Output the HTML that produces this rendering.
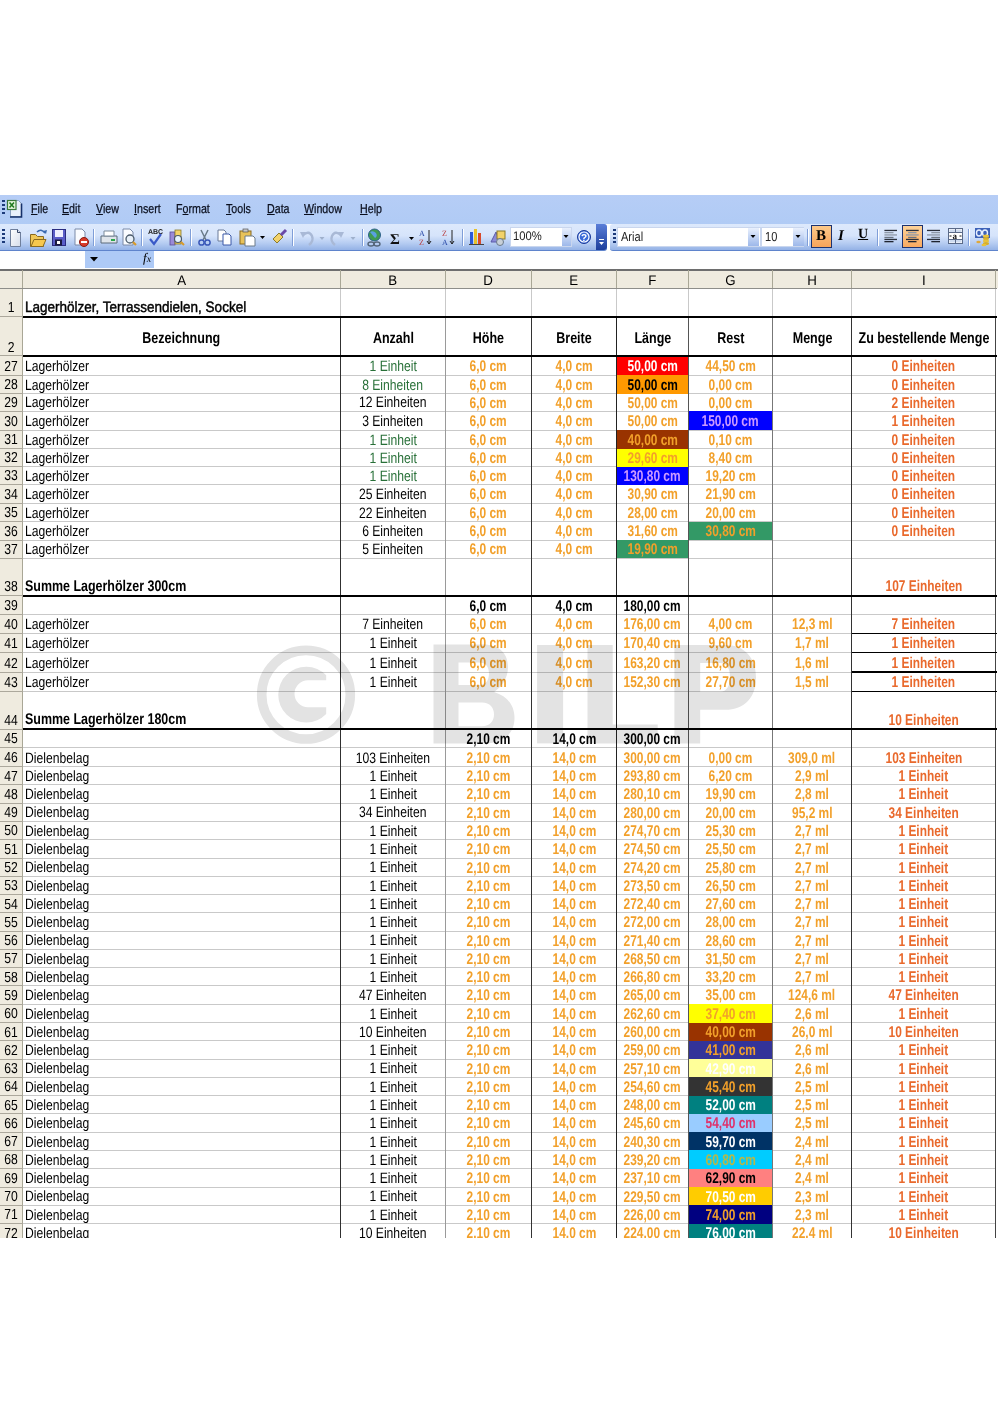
<!DOCTYPE html>
<html><head><meta charset="utf-8">
<style>
html,body{margin:0;padding:0;background:#fff;}
body{width:1000px;height:1410px;position:relative;overflow:hidden;font-family:"Liberation Sans",sans-serif;text-rendering:geometricPrecision;}
div{position:absolute;box-sizing:border-box;}
.c{white-space:nowrap;overflow:visible;}
.t{display:inline-block;transform-origin:50% 50%;}
.menu{left:0;top:195px;width:998px;height:29px;background:linear-gradient(#b6cdf6,#b0cbf5);}
.mi{top:6px;font-size:13px;color:#0a0f1e;transform:scaleX(.82);transform-origin:0 0;-webkit-text-stroke:0.25px #0a0f1e;}
.tb{top:224px;height:27px;background:linear-gradient(#dde9fc 0%,#d6e4fb 45%,#b4cbf1 75%,#94b2e6 100%);border-bottom:1.5px solid #5f84cc;}
.sep{top:5px;width:2px;height:17px;border-left:1px solid #7f9ed8;border-right:1px solid #fff;}
.grip{top:5px;width:3px;height:16px;background:repeating-linear-gradient(transparent 0 0.5px,#1c3a7a 0.5px 2.5px,transparent 2.5px 4px);}
</style></head><body>
<!-- menu bar -->
<div class="menu">
 <div class="grip" style="left:2px;top:5px;height:16px"></div>
 <svg style="position:absolute;left:6px;top:4px" width="18" height="20" viewBox="0 0 18 20">
  <path d="M4.5 1.5 h8 l3 3 v13 h-11z" fill="#e8f0fb" stroke="#8aa0c0" stroke-width="1"/>
  <path d="M15.5 4.5 v13.5 h-11.5" fill="none" stroke="#15306a" stroke-width="1.6"/>
  <rect x="1.5" y="1.5" width="8.5" height="9" fill="#e6f6dc" stroke="#3a7a3a" stroke-width="1.2"/>
  <path d="M3.5 3.5 L8 8.5 M8 3.5 L3.5 8.5" stroke="#1f7a1f" stroke-width="1.6"/>
 </svg>
 <div class="mi" style="left:31px"><u>F</u>ile</div>
 <div class="mi" style="left:62px"><u>E</u>dit</div>
 <div class="mi" style="left:96px"><u>V</u>iew</div>
 <div class="mi" style="left:134px"><u>I</u>nsert</div>
 <div class="mi" style="left:176px">F<u>o</u>rmat</div>
 <div class="mi" style="left:226px"><u>T</u>ools</div>
 <div class="mi" style="left:267px"><u>D</u>ata</div>
 <div class="mi" style="left:304px"><u>W</u>indow</div>
 <div class="mi" style="left:360px"><u>H</u>elp</div>
</div>
<!-- standard toolbar -->
<div class="tb" style="left:0;width:607px;border-radius:0 3px 3px 0">
 <div class="grip" style="left:2px"></div>
 <div class="sep" style="left:93px"></div><div class="sep" style="left:141px"></div><div class="sep" style="left:190px"></div><div class="sep" style="left:292px"></div><div class="sep" style="left:362px"></div><div class="sep" style="left:462px"></div>
 <svg style="position:absolute;left:0;top:0" width="607" height="26">
  <defs><linearGradient id="gPage" x1="0" y1="0" x2="1" y2="1"><stop offset="0" stop-color="#ffffff"/><stop offset="1" stop-color="#d4dcea"/></linearGradient></defs>
  <!-- new -->
  <path d="M10.5 5.5 h7 l3 3 v14 h-10z" fill="url(#gPage)" stroke="#6f7f9c" stroke-width="1"/>
  <path d="M17.5 5.5 v3 h3" fill="#dfe6f2" stroke="#3a4a6a" stroke-width="1"/>
  <!-- open -->
  <path d="M30.5 10.5 h5 l2 2 h6 v10 h-13z" fill="#f0c858" stroke="#8a6a20"/>
  <path d="M31 22.5 l3 -7 h12 l-3 7z" fill="#f7c84e" stroke="#8a6a20"/>
  <path d="M37 8 q4 -4 8 1" fill="none" stroke="#3a6ab0" stroke-width="1.6"/>
  <path d="M43 7 l3 3 l1 -4z" fill="#3a6ab0"/>
  <!-- save -->
  <rect x="52.5" y="5.5" width="13" height="16" fill="#5a5ec8" stroke="#2a2c80"/>
  <rect x="55" y="6" width="8" height="7" fill="#eef0ff"/>
  <rect x="55" y="15.5" width="7" height="6" fill="#1a1a40"/>
  <rect x="57" y="17" width="3" height="3" fill="#fff"/>
  <!-- permission -->
  <path d="M75 5 h7 l3 3 v13 h-10z" fill="#fafcff" stroke="#7a8aa8"/>
  <circle cx="84" cy="18" r="4.5" fill="#d83a2a" stroke="#8a1a10"/>
  <rect x="81" y="17" width="6" height="2" fill="#fff"/>
  <!-- print -->
  <path d="M101 12 h16 v7 h-16z" fill="#dfe4ea" stroke="#5a6a7a"/>
  <path d="M104 7 h10 v5 h-10z" fill="#fff" stroke="#7a8a9a"/>
  <rect x="111" y="15" width="4" height="2" fill="#2aa84a"/>
  <!-- preview -->
  <path d="M123 5 h7 l3 3 v13 h-10z" fill="#fafcff" stroke="#7a8aa8"/>
  <circle cx="130" cy="15" r="4" fill="#e8f0f8" stroke="#4a5a6a" stroke-width="1.3"/>
  <path d="M133 18 l3 3" stroke="#d89a2a" stroke-width="2.2"/>
  <!-- spelling -->
  <text x="148" y="10" font-family="Liberation Sans" font-size="7" font-weight="bold" fill="#222">ABC</text>
  <path d="M150 15 l4 5 l7 -10" fill="none" stroke="#3a5ac8" stroke-width="2.2"/>
  <!-- research -->
  <rect x="170" y="8" width="5" height="13" fill="#9a8ad8" stroke="#5a4a98" stroke-width=".8"/>
  <rect x="175" y="6" width="6" height="14" fill="#f2d26a" stroke="#8a7a2a" stroke-width=".8"/>
  <circle cx="178" cy="15" r="3.5" fill="#e8f4ff" stroke="#4a5a6a" stroke-width="1.2"/>
  <path d="M181 18 l3 3" stroke="#d89a2a" stroke-width="2"/>
  <!-- cut -->
  <path d="M201 6 l5 10 M208 6 l-5 10" stroke="#6a7a8a" stroke-width="1.5"/>
  <circle cx="201.5" cy="18.5" r="2.6" fill="none" stroke="#3a58b8" stroke-width="1.5"/>
  <circle cx="207.5" cy="18.5" r="2.6" fill="none" stroke="#3a58b8" stroke-width="1.5"/>
  <!-- copy -->
  <path d="M218 6 h6 l2 2 v9 h-8z" fill="#fff" stroke="#6a7a98"/>
  <path d="M223 10 h6 l2 2 v9 h-8z" fill="#fff" stroke="#3a58a8"/>
  <!-- paste -->
  <rect x="240" y="7" width="11" height="13" fill="#e8c25a" stroke="#8a6a20"/>
  <rect x="243" y="5" width="5" height="3" fill="#c8c8c8" stroke="#555" stroke-width=".7"/>
  <path d="M245 12 h8 l2 2 v8 h-10z" fill="#fff" stroke="#6a7a8a"/>
  <path d="M260 12 h5 l-2.5 3z" fill="#000"/>
  <!-- format painter -->
  <path d="M273 15 l6 -6 l4 4 l-6 6z" fill="#f2d26a" stroke="#8a7a2a"/>
  <path d="M281 11 l5 -5" stroke="#6a4aa8" stroke-width="3"/>
  <!-- undo/redo grayed -->
  <path d="M303 11 q6 -5 9 1 q2 5 -3 9" fill="none" stroke="#a9b9d6" stroke-width="2.4"/>
  <path d="M300 8 l6 0 l-3 6z" fill="#a9b9d6"/>
  <path d="M319.5 13 h5 l-2.5 3z" fill="#9fb0cc"/>
  <path d="M341 11 q-6 -5 -9 1 q-2 5 3 9" fill="none" stroke="#a9b9d6" stroke-width="2.4"/>
  <path d="M344 8 l-6 0 l3 6z" fill="#a9b9d6"/>
  <path d="M350.5 13 h5 l-2.5 3z" fill="#9fb0cc"/>
  <!-- hyperlink -->
  <circle cx="374.5" cy="11" r="6" fill="#3f9a52" stroke="#2c5f8a" stroke-width="1"/>
  <path d="M370 8 q3 -2 6 1 q2 3 -1 5" fill="#5aa0e0"/>
  <ellipse cx="371" cy="20" rx="3" ry="2" fill="none" stroke="#55657a" stroke-width="1.4"/>
  <ellipse cx="377" cy="20" rx="3" ry="2" fill="none" stroke="#55657a" stroke-width="1.4"/>
  <!-- sigma -->
  <text x="390" y="19.5" font-family="Liberation Serif" font-size="15" font-weight="bold" fill="#111">Σ</text>
  <path d="M409 13 h5 l-2.5 3z" fill="#000"/>
  <!-- sort -->
  <text x="419" y="12" font-family="Liberation Serif" font-size="8" fill="#2a4aa8">A</text>
  <text x="419" y="21" font-family="Liberation Serif" font-size="8" fill="#b83a3a">Z</text>
  <path d="M429 6 v14 M427 17 l2 3 l2 -3" stroke="#222" fill="none"/>
  <text x="442" y="12" font-family="Liberation Serif" font-size="8" fill="#b83a3a">Z</text>
  <text x="442" y="21" font-family="Liberation Serif" font-size="8" fill="#2a4aa8">A</text>
  <path d="M452 6 v14 M450 17 l2 3 l2 -3" stroke="#222" fill="none"/>
  <!-- chart -->
  <rect x="470" y="8" width="3" height="12" fill="#2a5ad8"/>
  <rect x="474" y="5" width="3" height="15" fill="#e8c22a"/>
  <rect x="478" y="9" width="3" height="11" fill="#d84a2a"/>
  <path d="M469 20.5 h15" stroke="#444"/>
  <!-- drawing -->
  <path d="M491 18 l5 -10 l4 10z" fill="#8a8ad8" stroke="#5a5aa8"/>
  <rect x="497" y="7" width="8" height="8" fill="#f2d26a" stroke="#8a7a2a"/>
  <circle cx="500" cy="18" r="3.5" fill="#c8d0d8" stroke="#6a7a8a"/>
  <!-- help -->
  <circle cx="584" cy="13" r="6.5" fill="#3a6ad8" stroke="#1a3a98"/>
  <circle cx="584" cy="13" r="5" fill="none" stroke="#fff" stroke-width="1.2"/>
  <text x="581" y="17" font-family="Liberation Sans" font-size="10" font-weight="bold" fill="#fff">?</text>
 </svg>
 <div style="left:510px;top:3px;width:62px;height:20px;background:#fff;border:1px solid #c9d6ee"></div>
 <div style="left:562px;top:4px;width:9px;height:18px;background:linear-gradient(#e9f0fd,#9db8ea)"></div>
 <svg style="position:absolute;left:563px;top:11px" width="7" height="4"><path d="M0.5 0 h5 l-2.5 3z" fill="#000"/></svg>
 <div style="left:513px;top:5px;font-size:12.5px;color:#222;transform:scaleX(.9);transform-origin:0 0">100%</div>
 <div style="left:596px;top:0;width:11px;height:26px;background:linear-gradient(#5a7ed8,#1e3f9c);border-radius:0 3px 3px 0"></div>
 <svg style="position:absolute;left:598px;top:15px" width="8" height="8"><path d="M1 0 h5 v1 h-5z M1 3 h5 l-2.5 3z" fill="#fff"/></svg>
</div>
<!-- formatting toolbar -->
<div class="tb" style="left:610px;width:388px;border-radius:3px 0 0 3px">
 <div class="grip" style="left:3px"></div>
 <div style="left:7px;top:3px;width:144px;height:20px;background:#fff;border:1px solid #c9d6ee"></div>
 <div style="left:138px;top:4px;width:11px;height:18px;background:linear-gradient(#e9f0fd,#9db8ea)"></div>
 <svg style="position:absolute;left:140px;top:11px" width="7" height="4"><path d="M0.5 0 h5 l-2.5 3z" fill="#000"/></svg>
 <div style="left:11px;top:5px;font-size:13px;color:#222;transform:scaleX(.85);transform-origin:0 0">Arial</div>
 <div style="left:151px;top:3px;width:43px;height:20px;background:#fff;border:1px solid #c9d6ee"></div>
 <div style="left:183px;top:4px;width:11px;height:18px;background:linear-gradient(#e9f0fd,#9db8ea)"></div>
 <svg style="position:absolute;left:185px;top:11px" width="7" height="4"><path d="M0.5 0 h5 l-2.5 3z" fill="#000"/></svg>
 <div style="left:155px;top:5px;font-size:13px;color:#222;transform:scaleX(.85);transform-origin:0 0">10</div>
 <div class="sep" style="left:197px"></div>
 <div style="left:201px;top:1px;width:21px;height:23px;background:linear-gradient(#fcc98a,#f8a45a);border:1px solid #1d3370"></div>
 <div style="left:206px;top:4px;font-family:'Liberation Serif';font-weight:bold;font-size:15px;color:#000">B</div>
 <div style="left:228px;top:4px;font-family:'Liberation Serif';font-style:italic;font-weight:bold;font-size:15px;color:#000">I</div>
 <div style="left:248px;top:3px;font-family:'Liberation Serif';font-weight:bold;font-size:14px;color:#000;text-decoration:underline">U</div>
 <div class="sep" style="left:267px"></div>
 <div style="left:292px;top:1px;width:21px;height:23px;background:linear-gradient(#fdd39a,#f9aa60);border:1px solid #1d3370"></div>
 <svg style="position:absolute;left:0;top:0" width="388" height="26">
  <rect x="274.4" y="5.8" width="12.6" height="1.3" fill="#2a2f3a"/><rect x="274.4" y="8.0" width="9.1" height="1.3" fill="#8d97a6"/><rect x="274.4" y="10.3" width="12.6" height="1.3" fill="#8d97a6"/><rect x="274.4" y="12.8" width="9.1" height="1.3" fill="#6a7380"/><rect x="274.4" y="14.8" width="12.6" height="1.3" fill="#2a2f3a"/><rect x="274.4" y="17.0" width="9.1" height="1.3" fill="#1e2430"/>
  <rect x="296.0" y="5.8" width="12.7" height="1.3" fill="#2a2f3a"/><rect x="298.1" y="8.0" width="8.4" height="1.3" fill="#8d97a6"/><rect x="296.0" y="10.3" width="12.7" height="1.3" fill="#8d97a6"/><rect x="298.1" y="12.8" width="8.4" height="1.3" fill="#6a7380"/><rect x="296.0" y="14.8" width="12.7" height="1.3" fill="#2a2f3a"/><rect x="298.1" y="17.0" width="8.4" height="1.3" fill="#1e2430"/>
  <rect x="317.0" y="5.8" width="13.0" height="1.3" fill="#2a2f3a"/><rect x="321.3" y="8.0" width="8.7" height="1.3" fill="#8d97a6"/><rect x="317.0" y="10.3" width="13.0" height="1.3" fill="#8d97a6"/><rect x="321.3" y="12.8" width="8.7" height="1.3" fill="#6a7380"/><rect x="317.0" y="14.8" width="13.0" height="1.3" fill="#2a2f3a"/><rect x="321.3" y="17.0" width="8.7" height="1.3" fill="#1e2430"/>
  <rect x="338.5" y="4.5" width="14" height="15" fill="#fff" stroke="#5a6a88"/>
  <rect x="339.5" y="5.5" width="5.5" height="2.5" fill="#cfdcf0"/><rect x="346" y="5.5" width="5.5" height="2.5" fill="#cfdcf0"/>
  <rect x="339.5" y="16" width="5.5" height="2.5" fill="#cfdcf0"/><rect x="346" y="16" width="5.5" height="2.5" fill="#cfdcf0"/>
  <path d="M338.5 8.5 h14 M338.5 15.5 h14 M345.5 4.5 v4 M345.5 15.5 v4" stroke="#5a6a88" stroke-width="1"/>
  <text x="342.5" y="14.6" font-family="Liberation Serif" font-size="9" font-weight="bold" fill="#111">a</text>
  <rect x="339.5" y="11.5" width="2" height="1" fill="#111"/><rect x="349.5" y="11.5" width="2" height="1" fill="#111"/>
  <rect x="365" y="4" width="15" height="10" fill="#3d62b8"/>
  <ellipse cx="369" cy="9" rx="2.5" ry="3" fill="none" stroke="#e8f0ff" stroke-width="1.4"/>
  <ellipse cx="375" cy="9" rx="2.5" ry="3" fill="none" stroke="#e8f0ff" stroke-width="1.4"/>
  <ellipse cx="376" cy="12" rx="3" ry="1.5" fill="#e8c23a"/><ellipse cx="376" cy="14.5" rx="3" ry="1.5" fill="#d8b02a"/>
  <ellipse cx="376" cy="17" rx="3" ry="1.5" fill="#e8c23a"/><ellipse cx="376" cy="19.5" rx="3" ry="1.5" fill="#d8b02a"/>
  <ellipse cx="374" cy="21" rx="2.5" ry="1.3" fill="#e8c23a"/><ellipse cx="368.5" cy="18" rx="2.2" ry="1.3" fill="#e0a83a"/>
 </svg>
 <div class="sep" style="left:358px"></div>
</div>
<!-- formula bar -->
<div style="left:85px;top:251px;width:69px;height:18px;background:#aecaf6"></div>
<svg style="position:absolute;left:90px;top:257px" width="9" height="5"><path d="M0 0 h8 l-4 4.5z" fill="#000"/></svg>
<div style="left:143px;top:250px;font-family:'Liberation Serif';font-style:italic;font-size:13px;color:#000">f<span style="font-size:10px">x</span></div>

<div style="left:0;top:268px;width:998px;height:970.3px;background:#fff"></div>
<div style="left:0;top:269px;width:998px;height:19px;background:#efebdf"></div>
<div style="left:0;top:288px;width:22.7px;height:950.3px;background:#efebdf"></div>
<div style="left:22.7px;top:315.7px;width:973.3px;height:1px;background:#c9c9c9"></div>
<div style="left:22.7px;top:355.3px;width:973.3px;height:1px;background:#c9c9c9"></div>
<div style="left:22.7px;top:374.5px;width:973.3px;height:1px;background:#c9c9c9"></div>
<div style="left:22.7px;top:393.1px;width:973.3px;height:1px;background:#c9c9c9"></div>
<div style="left:22.7px;top:410.9px;width:973.3px;height:1px;background:#c9c9c9"></div>
<div style="left:22.7px;top:429.5px;width:973.3px;height:1px;background:#c9c9c9"></div>
<div style="left:22.7px;top:448.1px;width:973.3px;height:1px;background:#c9c9c9"></div>
<div style="left:22.7px;top:466.1px;width:973.3px;height:1px;background:#c9c9c9"></div>
<div style="left:22.7px;top:484.2px;width:973.3px;height:1px;background:#c9c9c9"></div>
<div style="left:22.7px;top:502.6px;width:973.3px;height:1px;background:#c9c9c9"></div>
<div style="left:22.7px;top:521.0px;width:973.3px;height:1px;background:#c9c9c9"></div>
<div style="left:22.7px;top:539.5px;width:973.3px;height:1px;background:#c9c9c9"></div>
<div style="left:22.7px;top:557.7px;width:973.3px;height:1px;background:#c9c9c9"></div>
<div style="left:22.7px;top:594.9px;width:973.3px;height:1px;background:#c9c9c9"></div>
<div style="left:22.7px;top:613.9px;width:973.3px;height:1px;background:#c9c9c9"></div>
<div style="left:22.7px;top:632.9px;width:973.3px;height:1px;background:#c9c9c9"></div>
<div style="left:22.7px;top:652.1px;width:973.3px;height:1px;background:#c9c9c9"></div>
<div style="left:22.7px;top:671.6px;width:973.3px;height:1px;background:#c9c9c9"></div>
<div style="left:22.7px;top:690.8px;width:973.3px;height:1px;background:#c9c9c9"></div>
<div style="left:22.7px;top:728.5px;width:973.3px;height:1px;background:#c9c9c9"></div>
<div style="left:22.7px;top:747.1px;width:973.3px;height:1px;background:#c9c9c9"></div>
<div style="left:22.7px;top:766.1px;width:973.3px;height:1px;background:#c9c9c9"></div>
<div style="left:22.7px;top:784.38px;width:973.3px;height:1px;background:#c9c9c9"></div>
<div style="left:22.7px;top:802.66px;width:973.3px;height:1px;background:#c9c9c9"></div>
<div style="left:22.7px;top:820.94px;width:973.3px;height:1px;background:#c9c9c9"></div>
<div style="left:22.7px;top:839.22px;width:973.3px;height:1px;background:#c9c9c9"></div>
<div style="left:22.7px;top:857.5px;width:973.3px;height:1px;background:#c9c9c9"></div>
<div style="left:22.7px;top:875.78px;width:973.3px;height:1px;background:#c9c9c9"></div>
<div style="left:22.7px;top:894.06px;width:973.3px;height:1px;background:#c9c9c9"></div>
<div style="left:22.7px;top:912.34px;width:973.3px;height:1px;background:#c9c9c9"></div>
<div style="left:22.7px;top:930.62px;width:973.3px;height:1px;background:#c9c9c9"></div>
<div style="left:22.7px;top:948.9px;width:973.3px;height:1px;background:#c9c9c9"></div>
<div style="left:22.7px;top:967.18px;width:973.3px;height:1px;background:#c9c9c9"></div>
<div style="left:22.7px;top:985.46px;width:973.3px;height:1px;background:#c9c9c9"></div>
<div style="left:22.7px;top:1003.74px;width:973.3px;height:1px;background:#c9c9c9"></div>
<div style="left:22.7px;top:1022.02px;width:973.3px;height:1px;background:#c9c9c9"></div>
<div style="left:22.7px;top:1040.3px;width:973.3px;height:1px;background:#c9c9c9"></div>
<div style="left:22.7px;top:1058.58px;width:973.3px;height:1px;background:#c9c9c9"></div>
<div style="left:22.7px;top:1076.86px;width:973.3px;height:1px;background:#c9c9c9"></div>
<div style="left:22.7px;top:1095.14px;width:973.3px;height:1px;background:#c9c9c9"></div>
<div style="left:22.7px;top:1113.42px;width:973.3px;height:1px;background:#c9c9c9"></div>
<div style="left:22.7px;top:1131.7px;width:973.3px;height:1px;background:#c9c9c9"></div>
<div style="left:22.7px;top:1149.98px;width:973.3px;height:1px;background:#c9c9c9"></div>
<div style="left:22.7px;top:1168.26px;width:973.3px;height:1px;background:#c9c9c9"></div>
<div style="left:22.7px;top:1186.54px;width:973.3px;height:1px;background:#c9c9c9"></div>
<div style="left:22.7px;top:1204.82px;width:973.3px;height:1px;background:#c9c9c9"></div>
<div style="left:22.7px;top:1223.1px;width:973.3px;height:1px;background:#c9c9c9"></div>
<div style="left:22.7px;top:1241.38px;width:973.3px;height:1px;background:#c9c9c9"></div>
<div style="left:616.5px;top:355.8px;width:71.9px;height:19.2px;background:#ff0000"></div>
<div style="left:616.5px;top:375px;width:71.9px;height:18.6px;background:#ff9900"></div>
<div style="left:688.4px;top:411.4px;width:84.1px;height:18.6px;background:#0000ff"></div>
<div style="left:616.5px;top:430px;width:71.9px;height:18.6px;background:#993300"></div>
<div style="left:616.5px;top:448.6px;width:71.9px;height:18.0px;background:#ffff00"></div>
<div style="left:616.5px;top:466.6px;width:71.9px;height:18.1px;background:#0000ff"></div>
<div style="left:688.4px;top:521.5px;width:84.1px;height:18.5px;background:#339966"></div>
<div style="left:616.5px;top:540px;width:71.9px;height:18.2px;background:#339966"></div>
<div style="left:688.4px;top:1004.24px;width:84.1px;height:18.28px;background:#ffff00"></div>
<div style="left:688.4px;top:1022.52px;width:84.1px;height:18.28px;background:#993300"></div>
<div style="left:688.4px;top:1040.8px;width:84.1px;height:18.28px;background:#333399"></div>
<div style="left:688.4px;top:1059.08px;width:84.1px;height:18.28px;background:#ffff99"></div>
<div style="left:688.4px;top:1077.36px;width:84.1px;height:18.28px;background:#333333"></div>
<div style="left:688.4px;top:1095.64px;width:84.1px;height:18.28px;background:#008080"></div>
<div style="left:688.4px;top:1113.92px;width:84.1px;height:18.28px;background:#99ccff"></div>
<div style="left:688.4px;top:1132.2px;width:84.1px;height:18.28px;background:#003366"></div>
<div style="left:688.4px;top:1150.48px;width:84.1px;height:18.28px;background:#00ccff"></div>
<div style="left:688.4px;top:1168.76px;width:84.1px;height:18.28px;background:#ff8080"></div>
<div style="left:688.4px;top:1187.04px;width:84.1px;height:18.28px;background:#ffcc00"></div>
<div style="left:688.4px;top:1205.32px;width:84.1px;height:18.28px;background:#000080"></div>
<div style="left:688.4px;top:1223.6px;width:84.1px;height:18.28px;background:#008080"></div>
<div style="left:22.0px;top:288px;width:1.4px;height:950.3px;background:#a9a796"></div>
<div style="left:340.1px;top:288px;width:1px;height:28px;background:#c9c9c9"></div>
<div style="left:340.1px;top:316px;width:1px;height:922.3px;background:#303030"></div>
<div style="left:444.8px;top:288px;width:1px;height:28px;background:#c9c9c9"></div>
<div style="left:444.8px;top:316px;width:1px;height:922.3px;background:#9a9a9a"></div>
<div style="left:531.0px;top:288px;width:1px;height:28px;background:#c9c9c9"></div>
<div style="left:531.0px;top:316px;width:1px;height:922.3px;background:#333"></div>
<div style="left:616.0px;top:288px;width:1px;height:28px;background:#c9c9c9"></div>
<div style="left:616.0px;top:316px;width:1px;height:922.3px;background:#222"></div>
<div style="left:687.9px;top:288px;width:1px;height:28px;background:#c9c9c9"></div>
<div style="left:687.9px;top:316px;width:1px;height:922.3px;background:#555"></div>
<div style="left:772.0px;top:288px;width:1px;height:28px;background:#c9c9c9"></div>
<div style="left:772.0px;top:316px;width:1px;height:922.3px;background:#777"></div>
<div style="left:851.1px;top:288px;width:1px;height:28px;background:#c9c9c9"></div>
<div style="left:851.1px;top:316px;width:1px;height:922.3px;background:#333"></div>
<div style="left:995.3px;top:288px;width:1px;height:28px;background:#c9c9c9"></div>
<div style="left:995.3px;top:316px;width:1px;height:922.3px;background:#444"></div>
<div style="left:22.7px;top:315.5px;width:974.3px;height:2px;background:#000"></div>
<div style="left:22.7px;top:354.5px;width:974.3px;height:2px;background:#000"></div>
<div style="left:22.7px;top:594.6px;width:974.3px;height:2px;background:#000"></div>
<div style="left:22.7px;top:728.0px;width:974.3px;height:2px;background:#000"></div>
<div style="left:851.6px;top:632.6px;width:145.4px;height:1.6px;background:#000"></div>
<div style="left:851.6px;top:651.8px;width:145.4px;height:1.6px;background:#000"></div>
<div style="left:851.6px;top:671.3px;width:145.4px;height:1.6px;background:#000"></div>
<div style="left:851.6px;top:690.5px;width:145.4px;height:1.6px;background:#000"></div>
<div style="left:0px;top:315.7px;width:22.7px;height:1px;background:#aca89c"></div>
<div style="left:0px;top:355.3px;width:22.7px;height:1px;background:#aca89c"></div>
<div style="left:0px;top:374.5px;width:22.7px;height:1px;background:#aca89c"></div>
<div style="left:0px;top:393.1px;width:22.7px;height:1px;background:#aca89c"></div>
<div style="left:0px;top:410.9px;width:22.7px;height:1px;background:#aca89c"></div>
<div style="left:0px;top:429.5px;width:22.7px;height:1px;background:#aca89c"></div>
<div style="left:0px;top:448.1px;width:22.7px;height:1px;background:#aca89c"></div>
<div style="left:0px;top:466.1px;width:22.7px;height:1px;background:#aca89c"></div>
<div style="left:0px;top:484.2px;width:22.7px;height:1px;background:#aca89c"></div>
<div style="left:0px;top:502.6px;width:22.7px;height:1px;background:#aca89c"></div>
<div style="left:0px;top:521.0px;width:22.7px;height:1px;background:#aca89c"></div>
<div style="left:0px;top:539.5px;width:22.7px;height:1px;background:#aca89c"></div>
<div style="left:0px;top:557.7px;width:22.7px;height:1px;background:#aca89c"></div>
<div style="left:0px;top:594.9px;width:22.7px;height:1px;background:#aca89c"></div>
<div style="left:0px;top:613.9px;width:22.7px;height:1px;background:#aca89c"></div>
<div style="left:0px;top:632.9px;width:22.7px;height:1px;background:#aca89c"></div>
<div style="left:0px;top:652.1px;width:22.7px;height:1px;background:#aca89c"></div>
<div style="left:0px;top:671.6px;width:22.7px;height:1px;background:#aca89c"></div>
<div style="left:0px;top:690.8px;width:22.7px;height:1px;background:#aca89c"></div>
<div style="left:0px;top:728.5px;width:22.7px;height:1px;background:#aca89c"></div>
<div style="left:0px;top:747.1px;width:22.7px;height:1px;background:#aca89c"></div>
<div style="left:0px;top:766.1px;width:22.7px;height:1px;background:#aca89c"></div>
<div style="left:0px;top:784.38px;width:22.7px;height:1px;background:#aca89c"></div>
<div style="left:0px;top:802.66px;width:22.7px;height:1px;background:#aca89c"></div>
<div style="left:0px;top:820.94px;width:22.7px;height:1px;background:#aca89c"></div>
<div style="left:0px;top:839.22px;width:22.7px;height:1px;background:#aca89c"></div>
<div style="left:0px;top:857.5px;width:22.7px;height:1px;background:#aca89c"></div>
<div style="left:0px;top:875.78px;width:22.7px;height:1px;background:#aca89c"></div>
<div style="left:0px;top:894.06px;width:22.7px;height:1px;background:#aca89c"></div>
<div style="left:0px;top:912.34px;width:22.7px;height:1px;background:#aca89c"></div>
<div style="left:0px;top:930.62px;width:22.7px;height:1px;background:#aca89c"></div>
<div style="left:0px;top:948.9px;width:22.7px;height:1px;background:#aca89c"></div>
<div style="left:0px;top:967.18px;width:22.7px;height:1px;background:#aca89c"></div>
<div style="left:0px;top:985.46px;width:22.7px;height:1px;background:#aca89c"></div>
<div style="left:0px;top:1003.74px;width:22.7px;height:1px;background:#aca89c"></div>
<div style="left:0px;top:1022.02px;width:22.7px;height:1px;background:#aca89c"></div>
<div style="left:0px;top:1040.3px;width:22.7px;height:1px;background:#aca89c"></div>
<div style="left:0px;top:1058.58px;width:22.7px;height:1px;background:#aca89c"></div>
<div style="left:0px;top:1076.86px;width:22.7px;height:1px;background:#aca89c"></div>
<div style="left:0px;top:1095.14px;width:22.7px;height:1px;background:#aca89c"></div>
<div style="left:0px;top:1113.42px;width:22.7px;height:1px;background:#aca89c"></div>
<div style="left:0px;top:1131.7px;width:22.7px;height:1px;background:#aca89c"></div>
<div style="left:0px;top:1149.98px;width:22.7px;height:1px;background:#aca89c"></div>
<div style="left:0px;top:1168.26px;width:22.7px;height:1px;background:#aca89c"></div>
<div style="left:0px;top:1186.54px;width:22.7px;height:1px;background:#aca89c"></div>
<div style="left:0px;top:1204.82px;width:22.7px;height:1px;background:#aca89c"></div>
<div style="left:0px;top:1223.1px;width:22.7px;height:1px;background:#aca89c"></div>
<div style="left:0px;top:1241.38px;width:22.7px;height:1px;background:#aca89c"></div>
<div style="left:0px;top:287.6px;width:997px;height:1.4px;background:#8e8e8a"></div>
<div style="left:0;top:269px;width:998px;height:2px;background:#6e6e6e"></div>
<div style="left:22.05px;top:270px;width:1.3px;height:18px;background:#a9a796"></div>
<div style="left:339.95px;top:270px;width:1.3px;height:18px;background:#a9a796"></div>
<div style="left:444.65px;top:270px;width:1.3px;height:18px;background:#a9a796"></div>
<div style="left:530.85px;top:270px;width:1.3px;height:18px;background:#a9a796"></div>
<div style="left:615.85px;top:270px;width:1.3px;height:18px;background:#a9a796"></div>
<div style="left:687.75px;top:270px;width:1.3px;height:18px;background:#a9a796"></div>
<div style="left:771.85px;top:270px;width:1.3px;height:18px;background:#a9a796"></div>
<div style="left:850.95px;top:270px;width:1.3px;height:18px;background:#a9a796"></div>
<div style="left:995.15px;top:270px;width:1.3px;height:18px;background:#a9a796"></div>
<div class="c" style="left:24.5px;top:300.25px;width:517.9px;height:16px;line-height:16px;text-align:left;"><span class="t" style="color:#000;font-weight:normal;font-size:15px;transform:scaleX(0.9);transform-origin:0 50%;-webkit-text-stroke:0.45px #000">Lagerhölzer, Terrassendielen, Sockel</span></div>
<div class="c" style="left:-77.3px;top:330.5px;width:517.9px;height:16px;line-height:16px;text-align:center;"><span class="t" style="color:#000;font-weight:bold;font-size:15.5px;transform:scaleX(0.8080645161290322)">Bezeichnung</span></div>
<div class="c" style="left:240.6px;top:330.5px;width:304.7px;height:16px;line-height:16px;text-align:center;"><span class="t" style="color:#000;font-weight:bold;font-size:15.5px;transform:scaleX(0.8080645161290322)">Anzahl</span></div>
<div class="c" style="left:345.3px;top:330.5px;width:286.2px;height:16px;line-height:16px;text-align:center;"><span class="t" style="color:#000;font-weight:bold;font-size:15.5px;transform:scaleX(0.8080645161290322)">Höhe</span></div>
<div class="c" style="left:431.5px;top:330.5px;width:285.0px;height:16px;line-height:16px;text-align:center;"><span class="t" style="color:#000;font-weight:bold;font-size:15.5px;transform:scaleX(0.8080645161290322)">Breite</span></div>
<div class="c" style="left:516.5px;top:330.5px;width:271.9px;height:16px;line-height:16px;text-align:center;"><span class="t" style="color:#000;font-weight:bold;font-size:15.5px;transform:scaleX(0.8080645161290322)">Länge</span></div>
<div class="c" style="left:588.4px;top:330.5px;width:284.1px;height:16px;line-height:16px;text-align:center;"><span class="t" style="color:#000;font-weight:bold;font-size:15.5px;transform:scaleX(0.8080645161290322)">Rest</span></div>
<div class="c" style="left:672.5px;top:330.5px;width:279.1px;height:16px;line-height:16px;text-align:center;"><span class="t" style="color:#000;font-weight:bold;font-size:15.5px;transform:scaleX(0.8080645161290322)">Menge</span></div>
<div class="c" style="left:751.6px;top:330.5px;width:344.2px;height:16px;line-height:16px;text-align:center;"><span class="t" style="color:#000;font-weight:bold;font-size:15.5px;transform:scaleX(0.8080645161290322)">Zu bestellende Menge</span></div>
<div class="c" style="left:24.5px;top:359.05px;width:517.9px;height:16px;line-height:16px;text-align:left;"><span class="t" style="color:#000;font-weight:normal;font-size:15px;transform:scaleX(0.81);transform-origin:0 50%;">Lagerhölzer</span></div>
<div class="c" style="left:240.6px;top:359.05px;width:304.7px;height:16px;line-height:16px;text-align:center;"><span class="t" style="color:#287038;font-weight:normal;font-size:15px;transform:scaleX(0.81)">1 Einheit</span></div>
<div class="c" style="left:345.3px;top:359.25px;width:286.2px;height:16px;line-height:16px;text-align:center;"><span class="t" style="color:#f2a02a;font-weight:bold;font-size:15.5px;transform:scaleX(0.7687499999999999)">6,0 cm</span></div>
<div class="c" style="left:431.5px;top:359.25px;width:285.0px;height:16px;line-height:16px;text-align:center;"><span class="t" style="color:#f2a02a;font-weight:bold;font-size:15.5px;transform:scaleX(0.7687499999999999)">4,0 cm</span></div>
<div class="c" style="left:516.5px;top:359.25px;width:271.9px;height:16px;line-height:16px;text-align:center;"><span class="t" style="color:#fff;font-weight:bold;font-size:15.5px;transform:scaleX(0.7687499999999999)">50,00 cm</span></div>
<div class="c" style="left:588.4px;top:359.25px;width:284.1px;height:16px;line-height:16px;text-align:center;"><span class="t" style="color:#f2a02a;font-weight:bold;font-size:15.5px;transform:scaleX(0.7687499999999999)">44,50 cm</span></div>
<div class="c" style="left:751.6px;top:359.25px;width:344.2px;height:16px;line-height:16px;text-align:center;"><span class="t" style="color:#e9692c;font-weight:bold;font-size:15.5px;transform:scaleX(0.7687499999999999)">0 Einheiten</span></div>
<div class="c" style="left:24.5px;top:377.65px;width:517.9px;height:16px;line-height:16px;text-align:left;"><span class="t" style="color:#000;font-weight:normal;font-size:15px;transform:scaleX(0.81);transform-origin:0 50%;">Lagerhölzer</span></div>
<div class="c" style="left:240.6px;top:377.65px;width:304.7px;height:16px;line-height:16px;text-align:center;"><span class="t" style="color:#287038;font-weight:normal;font-size:15px;transform:scaleX(0.81)">8 Einheiten</span></div>
<div class="c" style="left:345.3px;top:377.85px;width:286.2px;height:16px;line-height:16px;text-align:center;"><span class="t" style="color:#f2a02a;font-weight:bold;font-size:15.5px;transform:scaleX(0.7687499999999999)">6,0 cm</span></div>
<div class="c" style="left:431.5px;top:377.85px;width:285.0px;height:16px;line-height:16px;text-align:center;"><span class="t" style="color:#f2a02a;font-weight:bold;font-size:15.5px;transform:scaleX(0.7687499999999999)">4,0 cm</span></div>
<div class="c" style="left:516.5px;top:377.85px;width:271.9px;height:16px;line-height:16px;text-align:center;"><span class="t" style="color:#000;font-weight:bold;font-size:15.5px;transform:scaleX(0.7687499999999999)">50,00 cm</span></div>
<div class="c" style="left:588.4px;top:377.85px;width:284.1px;height:16px;line-height:16px;text-align:center;"><span class="t" style="color:#f2a02a;font-weight:bold;font-size:15.5px;transform:scaleX(0.7687499999999999)">0,00 cm</span></div>
<div class="c" style="left:751.6px;top:377.85px;width:344.2px;height:16px;line-height:16px;text-align:center;"><span class="t" style="color:#e9692c;font-weight:bold;font-size:15.5px;transform:scaleX(0.7687499999999999)">0 Einheiten</span></div>
<div class="c" style="left:24.5px;top:395.45px;width:517.9px;height:16px;line-height:16px;text-align:left;"><span class="t" style="color:#000;font-weight:normal;font-size:15px;transform:scaleX(0.81);transform-origin:0 50%;">Lagerhölzer</span></div>
<div class="c" style="left:240.6px;top:395.45px;width:304.7px;height:16px;line-height:16px;text-align:center;"><span class="t" style="color:#000;font-weight:normal;font-size:15px;transform:scaleX(0.81)">12 Einheiten</span></div>
<div class="c" style="left:345.3px;top:395.65px;width:286.2px;height:16px;line-height:16px;text-align:center;"><span class="t" style="color:#f2a02a;font-weight:bold;font-size:15.5px;transform:scaleX(0.7687499999999999)">6,0 cm</span></div>
<div class="c" style="left:431.5px;top:395.65px;width:285.0px;height:16px;line-height:16px;text-align:center;"><span class="t" style="color:#f2a02a;font-weight:bold;font-size:15.5px;transform:scaleX(0.7687499999999999)">4,0 cm</span></div>
<div class="c" style="left:516.5px;top:395.65px;width:271.9px;height:16px;line-height:16px;text-align:center;"><span class="t" style="color:#f2a02a;font-weight:bold;font-size:15.5px;transform:scaleX(0.7687499999999999)">50,00 cm</span></div>
<div class="c" style="left:588.4px;top:395.65px;width:284.1px;height:16px;line-height:16px;text-align:center;"><span class="t" style="color:#f2a02a;font-weight:bold;font-size:15.5px;transform:scaleX(0.7687499999999999)">0,00 cm</span></div>
<div class="c" style="left:751.6px;top:395.65px;width:344.2px;height:16px;line-height:16px;text-align:center;"><span class="t" style="color:#e9692c;font-weight:bold;font-size:15.5px;transform:scaleX(0.7687499999999999)">2 Einheiten</span></div>
<div class="c" style="left:24.5px;top:414.05px;width:517.9px;height:16px;line-height:16px;text-align:left;"><span class="t" style="color:#000;font-weight:normal;font-size:15px;transform:scaleX(0.81);transform-origin:0 50%;">Lagerhölzer</span></div>
<div class="c" style="left:240.6px;top:414.05px;width:304.7px;height:16px;line-height:16px;text-align:center;"><span class="t" style="color:#000;font-weight:normal;font-size:15px;transform:scaleX(0.81)">3 Einheiten</span></div>
<div class="c" style="left:345.3px;top:414.25px;width:286.2px;height:16px;line-height:16px;text-align:center;"><span class="t" style="color:#f2a02a;font-weight:bold;font-size:15.5px;transform:scaleX(0.7687499999999999)">6,0 cm</span></div>
<div class="c" style="left:431.5px;top:414.25px;width:285.0px;height:16px;line-height:16px;text-align:center;"><span class="t" style="color:#f2a02a;font-weight:bold;font-size:15.5px;transform:scaleX(0.7687499999999999)">4,0 cm</span></div>
<div class="c" style="left:516.5px;top:414.25px;width:271.9px;height:16px;line-height:16px;text-align:center;"><span class="t" style="color:#f2a02a;font-weight:bold;font-size:15.5px;transform:scaleX(0.7687499999999999)">50,00 cm</span></div>
<div class="c" style="left:588.4px;top:414.25px;width:284.1px;height:16px;line-height:16px;text-align:center;"><span class="t" style="color:#cc99ff;font-weight:bold;font-size:15.5px;transform:scaleX(0.7687499999999999)">150,00 cm</span></div>
<div class="c" style="left:751.6px;top:414.25px;width:344.2px;height:16px;line-height:16px;text-align:center;"><span class="t" style="color:#e9692c;font-weight:bold;font-size:15.5px;transform:scaleX(0.7687499999999999)">1 Einheiten</span></div>
<div class="c" style="left:24.5px;top:432.65px;width:517.9px;height:16px;line-height:16px;text-align:left;"><span class="t" style="color:#000;font-weight:normal;font-size:15px;transform:scaleX(0.81);transform-origin:0 50%;">Lagerhölzer</span></div>
<div class="c" style="left:240.6px;top:432.65px;width:304.7px;height:16px;line-height:16px;text-align:center;"><span class="t" style="color:#287038;font-weight:normal;font-size:15px;transform:scaleX(0.81)">1 Einheit</span></div>
<div class="c" style="left:345.3px;top:432.85px;width:286.2px;height:16px;line-height:16px;text-align:center;"><span class="t" style="color:#f2a02a;font-weight:bold;font-size:15.5px;transform:scaleX(0.7687499999999999)">6,0 cm</span></div>
<div class="c" style="left:431.5px;top:432.85px;width:285.0px;height:16px;line-height:16px;text-align:center;"><span class="t" style="color:#f2a02a;font-weight:bold;font-size:15.5px;transform:scaleX(0.7687499999999999)">4,0 cm</span></div>
<div class="c" style="left:516.5px;top:432.85px;width:271.9px;height:16px;line-height:16px;text-align:center;"><span class="t" style="color:#f2a02a;font-weight:bold;font-size:15.5px;transform:scaleX(0.7687499999999999)">40,00 cm</span></div>
<div class="c" style="left:588.4px;top:432.85px;width:284.1px;height:16px;line-height:16px;text-align:center;"><span class="t" style="color:#f2a02a;font-weight:bold;font-size:15.5px;transform:scaleX(0.7687499999999999)">0,10 cm</span></div>
<div class="c" style="left:751.6px;top:432.85px;width:344.2px;height:16px;line-height:16px;text-align:center;"><span class="t" style="color:#e9692c;font-weight:bold;font-size:15.5px;transform:scaleX(0.7687499999999999)">0 Einheiten</span></div>
<div class="c" style="left:24.5px;top:450.65px;width:517.9px;height:16px;line-height:16px;text-align:left;"><span class="t" style="color:#000;font-weight:normal;font-size:15px;transform:scaleX(0.81);transform-origin:0 50%;">Lagerhölzer</span></div>
<div class="c" style="left:240.6px;top:450.65px;width:304.7px;height:16px;line-height:16px;text-align:center;"><span class="t" style="color:#287038;font-weight:normal;font-size:15px;transform:scaleX(0.81)">1 Einheit</span></div>
<div class="c" style="left:345.3px;top:450.85px;width:286.2px;height:16px;line-height:16px;text-align:center;"><span class="t" style="color:#f2a02a;font-weight:bold;font-size:15.5px;transform:scaleX(0.7687499999999999)">6,0 cm</span></div>
<div class="c" style="left:431.5px;top:450.85px;width:285.0px;height:16px;line-height:16px;text-align:center;"><span class="t" style="color:#f2a02a;font-weight:bold;font-size:15.5px;transform:scaleX(0.7687499999999999)">4,0 cm</span></div>
<div class="c" style="left:516.5px;top:450.85px;width:271.9px;height:16px;line-height:16px;text-align:center;"><span class="t" style="color:#f2a02a;font-weight:bold;font-size:15.5px;transform:scaleX(0.7687499999999999)">29,60 cm</span></div>
<div class="c" style="left:588.4px;top:450.85px;width:284.1px;height:16px;line-height:16px;text-align:center;"><span class="t" style="color:#f2a02a;font-weight:bold;font-size:15.5px;transform:scaleX(0.7687499999999999)">8,40 cm</span></div>
<div class="c" style="left:751.6px;top:450.85px;width:344.2px;height:16px;line-height:16px;text-align:center;"><span class="t" style="color:#e9692c;font-weight:bold;font-size:15.5px;transform:scaleX(0.7687499999999999)">0 Einheiten</span></div>
<div class="c" style="left:24.5px;top:468.75px;width:517.9px;height:16px;line-height:16px;text-align:left;"><span class="t" style="color:#000;font-weight:normal;font-size:15px;transform:scaleX(0.81);transform-origin:0 50%;">Lagerhölzer</span></div>
<div class="c" style="left:240.6px;top:468.75px;width:304.7px;height:16px;line-height:16px;text-align:center;"><span class="t" style="color:#287038;font-weight:normal;font-size:15px;transform:scaleX(0.81)">1 Einheit</span></div>
<div class="c" style="left:345.3px;top:468.95px;width:286.2px;height:16px;line-height:16px;text-align:center;"><span class="t" style="color:#f2a02a;font-weight:bold;font-size:15.5px;transform:scaleX(0.7687499999999999)">6,0 cm</span></div>
<div class="c" style="left:431.5px;top:468.95px;width:285.0px;height:16px;line-height:16px;text-align:center;"><span class="t" style="color:#f2a02a;font-weight:bold;font-size:15.5px;transform:scaleX(0.7687499999999999)">4,0 cm</span></div>
<div class="c" style="left:516.5px;top:468.95px;width:271.9px;height:16px;line-height:16px;text-align:center;"><span class="t" style="color:#cc99ff;font-weight:bold;font-size:15.5px;transform:scaleX(0.7687499999999999)">130,80 cm</span></div>
<div class="c" style="left:588.4px;top:468.95px;width:284.1px;height:16px;line-height:16px;text-align:center;"><span class="t" style="color:#f2a02a;font-weight:bold;font-size:15.5px;transform:scaleX(0.7687499999999999)">19,20 cm</span></div>
<div class="c" style="left:751.6px;top:468.95px;width:344.2px;height:16px;line-height:16px;text-align:center;"><span class="t" style="color:#e9692c;font-weight:bold;font-size:15.5px;transform:scaleX(0.7687499999999999)">0 Einheiten</span></div>
<div class="c" style="left:24.5px;top:487.15px;width:517.9px;height:16px;line-height:16px;text-align:left;"><span class="t" style="color:#000;font-weight:normal;font-size:15px;transform:scaleX(0.81);transform-origin:0 50%;">Lagerhölzer</span></div>
<div class="c" style="left:240.6px;top:487.15px;width:304.7px;height:16px;line-height:16px;text-align:center;"><span class="t" style="color:#000;font-weight:normal;font-size:15px;transform:scaleX(0.81)">25 Einheiten</span></div>
<div class="c" style="left:345.3px;top:487.35px;width:286.2px;height:16px;line-height:16px;text-align:center;"><span class="t" style="color:#f2a02a;font-weight:bold;font-size:15.5px;transform:scaleX(0.7687499999999999)">6,0 cm</span></div>
<div class="c" style="left:431.5px;top:487.35px;width:285.0px;height:16px;line-height:16px;text-align:center;"><span class="t" style="color:#f2a02a;font-weight:bold;font-size:15.5px;transform:scaleX(0.7687499999999999)">4,0 cm</span></div>
<div class="c" style="left:516.5px;top:487.35px;width:271.9px;height:16px;line-height:16px;text-align:center;"><span class="t" style="color:#f2a02a;font-weight:bold;font-size:15.5px;transform:scaleX(0.7687499999999999)">30,90 cm</span></div>
<div class="c" style="left:588.4px;top:487.35px;width:284.1px;height:16px;line-height:16px;text-align:center;"><span class="t" style="color:#f2a02a;font-weight:bold;font-size:15.5px;transform:scaleX(0.7687499999999999)">21,90 cm</span></div>
<div class="c" style="left:751.6px;top:487.35px;width:344.2px;height:16px;line-height:16px;text-align:center;"><span class="t" style="color:#e9692c;font-weight:bold;font-size:15.5px;transform:scaleX(0.7687499999999999)">0 Einheiten</span></div>
<div class="c" style="left:24.5px;top:505.55px;width:517.9px;height:16px;line-height:16px;text-align:left;"><span class="t" style="color:#000;font-weight:normal;font-size:15px;transform:scaleX(0.81);transform-origin:0 50%;">Lagerhölzer</span></div>
<div class="c" style="left:240.6px;top:505.55px;width:304.7px;height:16px;line-height:16px;text-align:center;"><span class="t" style="color:#000;font-weight:normal;font-size:15px;transform:scaleX(0.81)">22 Einheiten</span></div>
<div class="c" style="left:345.3px;top:505.75px;width:286.2px;height:16px;line-height:16px;text-align:center;"><span class="t" style="color:#f2a02a;font-weight:bold;font-size:15.5px;transform:scaleX(0.7687499999999999)">6,0 cm</span></div>
<div class="c" style="left:431.5px;top:505.75px;width:285.0px;height:16px;line-height:16px;text-align:center;"><span class="t" style="color:#f2a02a;font-weight:bold;font-size:15.5px;transform:scaleX(0.7687499999999999)">4,0 cm</span></div>
<div class="c" style="left:516.5px;top:505.75px;width:271.9px;height:16px;line-height:16px;text-align:center;"><span class="t" style="color:#f2a02a;font-weight:bold;font-size:15.5px;transform:scaleX(0.7687499999999999)">28,00 cm</span></div>
<div class="c" style="left:588.4px;top:505.75px;width:284.1px;height:16px;line-height:16px;text-align:center;"><span class="t" style="color:#f2a02a;font-weight:bold;font-size:15.5px;transform:scaleX(0.7687499999999999)">20,00 cm</span></div>
<div class="c" style="left:751.6px;top:505.75px;width:344.2px;height:16px;line-height:16px;text-align:center;"><span class="t" style="color:#e9692c;font-weight:bold;font-size:15.5px;transform:scaleX(0.7687499999999999)">0 Einheiten</span></div>
<div class="c" style="left:24.5px;top:524.05px;width:517.9px;height:16px;line-height:16px;text-align:left;"><span class="t" style="color:#000;font-weight:normal;font-size:15px;transform:scaleX(0.81);transform-origin:0 50%;">Lagerhölzer</span></div>
<div class="c" style="left:240.6px;top:524.05px;width:304.7px;height:16px;line-height:16px;text-align:center;"><span class="t" style="color:#000;font-weight:normal;font-size:15px;transform:scaleX(0.81)">6 Einheiten</span></div>
<div class="c" style="left:345.3px;top:524.25px;width:286.2px;height:16px;line-height:16px;text-align:center;"><span class="t" style="color:#f2a02a;font-weight:bold;font-size:15.5px;transform:scaleX(0.7687499999999999)">6,0 cm</span></div>
<div class="c" style="left:431.5px;top:524.25px;width:285.0px;height:16px;line-height:16px;text-align:center;"><span class="t" style="color:#f2a02a;font-weight:bold;font-size:15.5px;transform:scaleX(0.7687499999999999)">4,0 cm</span></div>
<div class="c" style="left:516.5px;top:524.25px;width:271.9px;height:16px;line-height:16px;text-align:center;"><span class="t" style="color:#f2a02a;font-weight:bold;font-size:15.5px;transform:scaleX(0.7687499999999999)">31,60 cm</span></div>
<div class="c" style="left:588.4px;top:524.25px;width:284.1px;height:16px;line-height:16px;text-align:center;"><span class="t" style="color:#f2a02a;font-weight:bold;font-size:15.5px;transform:scaleX(0.7687499999999999)">30,80 cm</span></div>
<div class="c" style="left:751.6px;top:524.25px;width:344.2px;height:16px;line-height:16px;text-align:center;"><span class="t" style="color:#e9692c;font-weight:bold;font-size:15.5px;transform:scaleX(0.7687499999999999)">0 Einheiten</span></div>
<div class="c" style="left:24.5px;top:542.25px;width:517.9px;height:16px;line-height:16px;text-align:left;"><span class="t" style="color:#000;font-weight:normal;font-size:15px;transform:scaleX(0.81);transform-origin:0 50%;">Lagerhölzer</span></div>
<div class="c" style="left:240.6px;top:542.25px;width:304.7px;height:16px;line-height:16px;text-align:center;"><span class="t" style="color:#000;font-weight:normal;font-size:15px;transform:scaleX(0.81)">5 Einheiten</span></div>
<div class="c" style="left:345.3px;top:542.45px;width:286.2px;height:16px;line-height:16px;text-align:center;"><span class="t" style="color:#f2a02a;font-weight:bold;font-size:15.5px;transform:scaleX(0.7687499999999999)">6,0 cm</span></div>
<div class="c" style="left:431.5px;top:542.45px;width:285.0px;height:16px;line-height:16px;text-align:center;"><span class="t" style="color:#f2a02a;font-weight:bold;font-size:15.5px;transform:scaleX(0.7687499999999999)">4,0 cm</span></div>
<div class="c" style="left:516.5px;top:542.45px;width:271.9px;height:16px;line-height:16px;text-align:center;"><span class="t" style="color:#f2a02a;font-weight:bold;font-size:15.5px;transform:scaleX(0.7687499999999999)">19,90 cm</span></div>
<div class="c" style="left:24.5px;top:578.75px;width:517.9px;height:16px;line-height:16px;text-align:left;"><span class="t" style="color:#000;font-weight:bold;font-size:15.5px;transform:scaleX(0.8032258064516129);transform-origin:0 50%;">Summe Lagerhölzer 300cm</span></div>
<div class="c" style="left:751.6px;top:579.2px;width:344.2px;height:16px;line-height:16px;text-align:center;"><span class="t" style="color:#e9692c;font-weight:bold;font-size:15.5px;transform:scaleX(0.7687499999999999)">107 Einheiten</span></div>
<div class="c" style="left:345.3px;top:598.65px;width:286.2px;height:16px;line-height:16px;text-align:center;"><span class="t" style="color:#000;font-weight:bold;font-size:15.5px;transform:scaleX(0.7687499999999999)">6,0 cm</span></div>
<div class="c" style="left:431.5px;top:598.65px;width:285.0px;height:16px;line-height:16px;text-align:center;"><span class="t" style="color:#000;font-weight:bold;font-size:15.5px;transform:scaleX(0.7687499999999999)">4,0 cm</span></div>
<div class="c" style="left:516.5px;top:598.65px;width:271.9px;height:16px;line-height:16px;text-align:center;"><span class="t" style="color:#000;font-weight:bold;font-size:15.5px;transform:scaleX(0.7687499999999999)">180,00 cm</span></div>
<div class="c" style="left:24.5px;top:617.0px;width:517.9px;height:16px;line-height:16px;text-align:left;"><span class="t" style="color:#000;font-weight:normal;font-size:15px;transform:scaleX(0.81);transform-origin:0 50%;">Lagerhölzer</span></div>
<div class="c" style="left:240.6px;top:617.0px;width:304.7px;height:16px;line-height:16px;text-align:center;"><span class="t" style="color:#000;font-weight:normal;font-size:15px;transform:scaleX(0.81)">7 Einheiten</span></div>
<div class="c" style="left:345.3px;top:617.2px;width:286.2px;height:16px;line-height:16px;text-align:center;"><span class="t" style="color:#f2a02a;font-weight:bold;font-size:15.5px;transform:scaleX(0.7687499999999999)">6,0 cm</span></div>
<div class="c" style="left:431.5px;top:617.2px;width:285.0px;height:16px;line-height:16px;text-align:center;"><span class="t" style="color:#f2a02a;font-weight:bold;font-size:15.5px;transform:scaleX(0.7687499999999999)">4,0 cm</span></div>
<div class="c" style="left:516.5px;top:617.2px;width:271.9px;height:16px;line-height:16px;text-align:center;"><span class="t" style="color:#f2a02a;font-weight:bold;font-size:15.5px;transform:scaleX(0.7687499999999999)">176,00 cm</span></div>
<div class="c" style="left:588.4px;top:617.2px;width:284.1px;height:16px;line-height:16px;text-align:center;"><span class="t" style="color:#f2a02a;font-weight:bold;font-size:15.5px;transform:scaleX(0.7687499999999999)">4,00 cm</span></div>
<div class="c" style="left:672.5px;top:617.2px;width:279.1px;height:16px;line-height:16px;text-align:center;"><span class="t" style="color:#f2a02a;font-weight:bold;font-size:15.5px;transform:scaleX(0.7687499999999999)">12,3 ml</span></div>
<div class="c" style="left:751.6px;top:617.2px;width:344.2px;height:16px;line-height:16px;text-align:center;"><span class="t" style="color:#e9692c;font-weight:bold;font-size:15.5px;transform:scaleX(0.7687499999999999)">7 Einheiten</span></div>
<div class="c" style="left:24.5px;top:636.2px;width:517.9px;height:16px;line-height:16px;text-align:left;"><span class="t" style="color:#000;font-weight:normal;font-size:15px;transform:scaleX(0.81);transform-origin:0 50%;">Lagerhölzer</span></div>
<div class="c" style="left:240.6px;top:636.2px;width:304.7px;height:16px;line-height:16px;text-align:center;"><span class="t" style="color:#000;font-weight:normal;font-size:15px;transform:scaleX(0.81)">1 Einheit</span></div>
<div class="c" style="left:345.3px;top:636.4px;width:286.2px;height:16px;line-height:16px;text-align:center;"><span class="t" style="color:#f2a02a;font-weight:bold;font-size:15.5px;transform:scaleX(0.7687499999999999)">6,0 cm</span></div>
<div class="c" style="left:431.5px;top:636.4px;width:285.0px;height:16px;line-height:16px;text-align:center;"><span class="t" style="color:#f2a02a;font-weight:bold;font-size:15.5px;transform:scaleX(0.7687499999999999)">4,0 cm</span></div>
<div class="c" style="left:516.5px;top:636.4px;width:271.9px;height:16px;line-height:16px;text-align:center;"><span class="t" style="color:#f2a02a;font-weight:bold;font-size:15.5px;transform:scaleX(0.7687499999999999)">170,40 cm</span></div>
<div class="c" style="left:588.4px;top:636.4px;width:284.1px;height:16px;line-height:16px;text-align:center;"><span class="t" style="color:#f2a02a;font-weight:bold;font-size:15.5px;transform:scaleX(0.7687499999999999)">9,60 cm</span></div>
<div class="c" style="left:672.5px;top:636.4px;width:279.1px;height:16px;line-height:16px;text-align:center;"><span class="t" style="color:#f2a02a;font-weight:bold;font-size:15.5px;transform:scaleX(0.7687499999999999)">1,7 ml</span></div>
<div class="c" style="left:751.6px;top:636.4px;width:344.2px;height:16px;line-height:16px;text-align:center;"><span class="t" style="color:#e9692c;font-weight:bold;font-size:15.5px;transform:scaleX(0.7687499999999999)">1 Einheiten</span></div>
<div class="c" style="left:24.5px;top:655.7px;width:517.9px;height:16px;line-height:16px;text-align:left;"><span class="t" style="color:#000;font-weight:normal;font-size:15px;transform:scaleX(0.81);transform-origin:0 50%;">Lagerhölzer</span></div>
<div class="c" style="left:240.6px;top:655.7px;width:304.7px;height:16px;line-height:16px;text-align:center;"><span class="t" style="color:#000;font-weight:normal;font-size:15px;transform:scaleX(0.81)">1 Einheit</span></div>
<div class="c" style="left:345.3px;top:655.9px;width:286.2px;height:16px;line-height:16px;text-align:center;"><span class="t" style="color:#f2a02a;font-weight:bold;font-size:15.5px;transform:scaleX(0.7687499999999999)">6,0 cm</span></div>
<div class="c" style="left:431.5px;top:655.9px;width:285.0px;height:16px;line-height:16px;text-align:center;"><span class="t" style="color:#f2a02a;font-weight:bold;font-size:15.5px;transform:scaleX(0.7687499999999999)">4,0 cm</span></div>
<div class="c" style="left:516.5px;top:655.9px;width:271.9px;height:16px;line-height:16px;text-align:center;"><span class="t" style="color:#f2a02a;font-weight:bold;font-size:15.5px;transform:scaleX(0.7687499999999999)">163,20 cm</span></div>
<div class="c" style="left:588.4px;top:655.9px;width:284.1px;height:16px;line-height:16px;text-align:center;"><span class="t" style="color:#f2a02a;font-weight:bold;font-size:15.5px;transform:scaleX(0.7687499999999999)">16,80 cm</span></div>
<div class="c" style="left:672.5px;top:655.9px;width:279.1px;height:16px;line-height:16px;text-align:center;"><span class="t" style="color:#f2a02a;font-weight:bold;font-size:15.5px;transform:scaleX(0.7687499999999999)">1,6 ml</span></div>
<div class="c" style="left:751.6px;top:655.9px;width:344.2px;height:16px;line-height:16px;text-align:center;"><span class="t" style="color:#e9692c;font-weight:bold;font-size:15.5px;transform:scaleX(0.7687499999999999)">1 Einheiten</span></div>
<div class="c" style="left:24.5px;top:674.9px;width:517.9px;height:16px;line-height:16px;text-align:left;"><span class="t" style="color:#000;font-weight:normal;font-size:15px;transform:scaleX(0.81);transform-origin:0 50%;">Lagerhölzer</span></div>
<div class="c" style="left:240.6px;top:674.9px;width:304.7px;height:16px;line-height:16px;text-align:center;"><span class="t" style="color:#000;font-weight:normal;font-size:15px;transform:scaleX(0.81)">1 Einheit</span></div>
<div class="c" style="left:345.3px;top:675.1px;width:286.2px;height:16px;line-height:16px;text-align:center;"><span class="t" style="color:#f2a02a;font-weight:bold;font-size:15.5px;transform:scaleX(0.7687499999999999)">6,0 cm</span></div>
<div class="c" style="left:431.5px;top:675.1px;width:285.0px;height:16px;line-height:16px;text-align:center;"><span class="t" style="color:#f2a02a;font-weight:bold;font-size:15.5px;transform:scaleX(0.7687499999999999)">4,0 cm</span></div>
<div class="c" style="left:516.5px;top:675.1px;width:271.9px;height:16px;line-height:16px;text-align:center;"><span class="t" style="color:#f2a02a;font-weight:bold;font-size:15.5px;transform:scaleX(0.7687499999999999)">152,30 cm</span></div>
<div class="c" style="left:588.4px;top:675.1px;width:284.1px;height:16px;line-height:16px;text-align:center;"><span class="t" style="color:#f2a02a;font-weight:bold;font-size:15.5px;transform:scaleX(0.7687499999999999)">27,70 cm</span></div>
<div class="c" style="left:672.5px;top:675.1px;width:279.1px;height:16px;line-height:16px;text-align:center;"><span class="t" style="color:#f2a02a;font-weight:bold;font-size:15.5px;transform:scaleX(0.7687499999999999)">1,5 ml</span></div>
<div class="c" style="left:751.6px;top:675.1px;width:344.2px;height:16px;line-height:16px;text-align:center;"><span class="t" style="color:#e9692c;font-weight:bold;font-size:15.5px;transform:scaleX(0.7687499999999999)">1 Einheiten</span></div>
<div class="c" style="left:24.5px;top:712.35px;width:517.9px;height:16px;line-height:16px;text-align:left;"><span class="t" style="color:#000;font-weight:bold;font-size:15.5px;transform:scaleX(0.8032258064516129);transform-origin:0 50%;">Summe Lagerhölzer 180cm</span></div>
<div class="c" style="left:751.6px;top:712.8px;width:344.2px;height:16px;line-height:16px;text-align:center;"><span class="t" style="color:#e9692c;font-weight:bold;font-size:15.5px;transform:scaleX(0.7687499999999999)">10 Einheiten</span></div>
<div class="c" style="left:345.3px;top:731.85px;width:286.2px;height:16px;line-height:16px;text-align:center;"><span class="t" style="color:#000;font-weight:bold;font-size:15.5px;transform:scaleX(0.7687499999999999)">2,10 cm</span></div>
<div class="c" style="left:431.5px;top:731.85px;width:285.0px;height:16px;line-height:16px;text-align:center;"><span class="t" style="color:#000;font-weight:bold;font-size:15.5px;transform:scaleX(0.7687499999999999)">14,0 cm</span></div>
<div class="c" style="left:516.5px;top:731.85px;width:271.9px;height:16px;line-height:16px;text-align:center;"><span class="t" style="color:#000;font-weight:bold;font-size:15.5px;transform:scaleX(0.7687499999999999)">300,00 cm</span></div>
<div class="c" style="left:24.5px;top:750.65px;width:517.9px;height:16px;line-height:16px;text-align:left;"><span class="t" style="color:#000;font-weight:normal;font-size:15px;transform:scaleX(0.81);transform-origin:0 50%;">Dielenbelag</span></div>
<div class="c" style="left:240.6px;top:750.65px;width:304.7px;height:16px;line-height:16px;text-align:center;"><span class="t" style="color:#000;font-weight:normal;font-size:15px;transform:scaleX(0.81)">103 Einheiten</span></div>
<div class="c" style="left:345.3px;top:750.85px;width:286.2px;height:16px;line-height:16px;text-align:center;"><span class="t" style="color:#f2a02a;font-weight:bold;font-size:15.5px;transform:scaleX(0.7687499999999999)">2,10 cm</span></div>
<div class="c" style="left:431.5px;top:750.85px;width:285.0px;height:16px;line-height:16px;text-align:center;"><span class="t" style="color:#f2a02a;font-weight:bold;font-size:15.5px;transform:scaleX(0.7687499999999999)">14,0 cm</span></div>
<div class="c" style="left:516.5px;top:750.85px;width:271.9px;height:16px;line-height:16px;text-align:center;"><span class="t" style="color:#f2a02a;font-weight:bold;font-size:15.5px;transform:scaleX(0.7687499999999999)">300,00 cm</span></div>
<div class="c" style="left:588.4px;top:750.85px;width:284.1px;height:16px;line-height:16px;text-align:center;"><span class="t" style="color:#f2a02a;font-weight:bold;font-size:15.5px;transform:scaleX(0.7687499999999999)">0,00 cm</span></div>
<div class="c" style="left:672.5px;top:750.85px;width:279.1px;height:16px;line-height:16px;text-align:center;"><span class="t" style="color:#f2a02a;font-weight:bold;font-size:15.5px;transform:scaleX(0.7687499999999999)">309,0 ml</span></div>
<div class="c" style="left:751.6px;top:750.85px;width:344.2px;height:16px;line-height:16px;text-align:center;"><span class="t" style="color:#e9692c;font-weight:bold;font-size:15.5px;transform:scaleX(0.7687499999999999)">103 Einheiten</span></div>
<div class="c" style="left:24.5px;top:768.93px;width:517.9px;height:16px;line-height:16px;text-align:left;"><span class="t" style="color:#000;font-weight:normal;font-size:15px;transform:scaleX(0.81);transform-origin:0 50%;">Dielenbelag</span></div>
<div class="c" style="left:240.6px;top:768.93px;width:304.7px;height:16px;line-height:16px;text-align:center;"><span class="t" style="color:#000;font-weight:normal;font-size:15px;transform:scaleX(0.81)">1 Einheit</span></div>
<div class="c" style="left:345.3px;top:769.13px;width:286.2px;height:16px;line-height:16px;text-align:center;"><span class="t" style="color:#f2a02a;font-weight:bold;font-size:15.5px;transform:scaleX(0.7687499999999999)">2,10 cm</span></div>
<div class="c" style="left:431.5px;top:769.13px;width:285.0px;height:16px;line-height:16px;text-align:center;"><span class="t" style="color:#f2a02a;font-weight:bold;font-size:15.5px;transform:scaleX(0.7687499999999999)">14,0 cm</span></div>
<div class="c" style="left:516.5px;top:769.13px;width:271.9px;height:16px;line-height:16px;text-align:center;"><span class="t" style="color:#f2a02a;font-weight:bold;font-size:15.5px;transform:scaleX(0.7687499999999999)">293,80 cm</span></div>
<div class="c" style="left:588.4px;top:769.13px;width:284.1px;height:16px;line-height:16px;text-align:center;"><span class="t" style="color:#f2a02a;font-weight:bold;font-size:15.5px;transform:scaleX(0.7687499999999999)">6,20 cm</span></div>
<div class="c" style="left:672.5px;top:769.13px;width:279.1px;height:16px;line-height:16px;text-align:center;"><span class="t" style="color:#f2a02a;font-weight:bold;font-size:15.5px;transform:scaleX(0.7687499999999999)">2,9 ml</span></div>
<div class="c" style="left:751.6px;top:769.13px;width:344.2px;height:16px;line-height:16px;text-align:center;"><span class="t" style="color:#e9692c;font-weight:bold;font-size:15.5px;transform:scaleX(0.7687499999999999)">1 Einheit</span></div>
<div class="c" style="left:24.5px;top:787.21px;width:517.9px;height:16px;line-height:16px;text-align:left;"><span class="t" style="color:#000;font-weight:normal;font-size:15px;transform:scaleX(0.81);transform-origin:0 50%;">Dielenbelag</span></div>
<div class="c" style="left:240.6px;top:787.21px;width:304.7px;height:16px;line-height:16px;text-align:center;"><span class="t" style="color:#000;font-weight:normal;font-size:15px;transform:scaleX(0.81)">1 Einheit</span></div>
<div class="c" style="left:345.3px;top:787.41px;width:286.2px;height:16px;line-height:16px;text-align:center;"><span class="t" style="color:#f2a02a;font-weight:bold;font-size:15.5px;transform:scaleX(0.7687499999999999)">2,10 cm</span></div>
<div class="c" style="left:431.5px;top:787.41px;width:285.0px;height:16px;line-height:16px;text-align:center;"><span class="t" style="color:#f2a02a;font-weight:bold;font-size:15.5px;transform:scaleX(0.7687499999999999)">14,0 cm</span></div>
<div class="c" style="left:516.5px;top:787.41px;width:271.9px;height:16px;line-height:16px;text-align:center;"><span class="t" style="color:#f2a02a;font-weight:bold;font-size:15.5px;transform:scaleX(0.7687499999999999)">280,10 cm</span></div>
<div class="c" style="left:588.4px;top:787.41px;width:284.1px;height:16px;line-height:16px;text-align:center;"><span class="t" style="color:#f2a02a;font-weight:bold;font-size:15.5px;transform:scaleX(0.7687499999999999)">19,90 cm</span></div>
<div class="c" style="left:672.5px;top:787.41px;width:279.1px;height:16px;line-height:16px;text-align:center;"><span class="t" style="color:#f2a02a;font-weight:bold;font-size:15.5px;transform:scaleX(0.7687499999999999)">2,8 ml</span></div>
<div class="c" style="left:751.6px;top:787.41px;width:344.2px;height:16px;line-height:16px;text-align:center;"><span class="t" style="color:#e9692c;font-weight:bold;font-size:15.5px;transform:scaleX(0.7687499999999999)">1 Einheit</span></div>
<div class="c" style="left:24.5px;top:805.49px;width:517.9px;height:16px;line-height:16px;text-align:left;"><span class="t" style="color:#000;font-weight:normal;font-size:15px;transform:scaleX(0.81);transform-origin:0 50%;">Dielenbelag</span></div>
<div class="c" style="left:240.6px;top:805.49px;width:304.7px;height:16px;line-height:16px;text-align:center;"><span class="t" style="color:#000;font-weight:normal;font-size:15px;transform:scaleX(0.81)">34 Einheiten</span></div>
<div class="c" style="left:345.3px;top:805.69px;width:286.2px;height:16px;line-height:16px;text-align:center;"><span class="t" style="color:#f2a02a;font-weight:bold;font-size:15.5px;transform:scaleX(0.7687499999999999)">2,10 cm</span></div>
<div class="c" style="left:431.5px;top:805.69px;width:285.0px;height:16px;line-height:16px;text-align:center;"><span class="t" style="color:#f2a02a;font-weight:bold;font-size:15.5px;transform:scaleX(0.7687499999999999)">14,0 cm</span></div>
<div class="c" style="left:516.5px;top:805.69px;width:271.9px;height:16px;line-height:16px;text-align:center;"><span class="t" style="color:#f2a02a;font-weight:bold;font-size:15.5px;transform:scaleX(0.7687499999999999)">280,00 cm</span></div>
<div class="c" style="left:588.4px;top:805.69px;width:284.1px;height:16px;line-height:16px;text-align:center;"><span class="t" style="color:#f2a02a;font-weight:bold;font-size:15.5px;transform:scaleX(0.7687499999999999)">20,00 cm</span></div>
<div class="c" style="left:672.5px;top:805.69px;width:279.1px;height:16px;line-height:16px;text-align:center;"><span class="t" style="color:#f2a02a;font-weight:bold;font-size:15.5px;transform:scaleX(0.7687499999999999)">95,2 ml</span></div>
<div class="c" style="left:751.6px;top:805.69px;width:344.2px;height:16px;line-height:16px;text-align:center;"><span class="t" style="color:#e9692c;font-weight:bold;font-size:15.5px;transform:scaleX(0.7687499999999999)">34 Einheiten</span></div>
<div class="c" style="left:24.5px;top:823.77px;width:517.9px;height:16px;line-height:16px;text-align:left;"><span class="t" style="color:#000;font-weight:normal;font-size:15px;transform:scaleX(0.81);transform-origin:0 50%;">Dielenbelag</span></div>
<div class="c" style="left:240.6px;top:823.77px;width:304.7px;height:16px;line-height:16px;text-align:center;"><span class="t" style="color:#000;font-weight:normal;font-size:15px;transform:scaleX(0.81)">1 Einheit</span></div>
<div class="c" style="left:345.3px;top:823.97px;width:286.2px;height:16px;line-height:16px;text-align:center;"><span class="t" style="color:#f2a02a;font-weight:bold;font-size:15.5px;transform:scaleX(0.7687499999999999)">2,10 cm</span></div>
<div class="c" style="left:431.5px;top:823.97px;width:285.0px;height:16px;line-height:16px;text-align:center;"><span class="t" style="color:#f2a02a;font-weight:bold;font-size:15.5px;transform:scaleX(0.7687499999999999)">14,0 cm</span></div>
<div class="c" style="left:516.5px;top:823.97px;width:271.9px;height:16px;line-height:16px;text-align:center;"><span class="t" style="color:#f2a02a;font-weight:bold;font-size:15.5px;transform:scaleX(0.7687499999999999)">274,70 cm</span></div>
<div class="c" style="left:588.4px;top:823.97px;width:284.1px;height:16px;line-height:16px;text-align:center;"><span class="t" style="color:#f2a02a;font-weight:bold;font-size:15.5px;transform:scaleX(0.7687499999999999)">25,30 cm</span></div>
<div class="c" style="left:672.5px;top:823.97px;width:279.1px;height:16px;line-height:16px;text-align:center;"><span class="t" style="color:#f2a02a;font-weight:bold;font-size:15.5px;transform:scaleX(0.7687499999999999)">2,7 ml</span></div>
<div class="c" style="left:751.6px;top:823.97px;width:344.2px;height:16px;line-height:16px;text-align:center;"><span class="t" style="color:#e9692c;font-weight:bold;font-size:15.5px;transform:scaleX(0.7687499999999999)">1 Einheit</span></div>
<div class="c" style="left:24.5px;top:842.05px;width:517.9px;height:16px;line-height:16px;text-align:left;"><span class="t" style="color:#000;font-weight:normal;font-size:15px;transform:scaleX(0.81);transform-origin:0 50%;">Dielenbelag</span></div>
<div class="c" style="left:240.6px;top:842.05px;width:304.7px;height:16px;line-height:16px;text-align:center;"><span class="t" style="color:#000;font-weight:normal;font-size:15px;transform:scaleX(0.81)">1 Einheit</span></div>
<div class="c" style="left:345.3px;top:842.25px;width:286.2px;height:16px;line-height:16px;text-align:center;"><span class="t" style="color:#f2a02a;font-weight:bold;font-size:15.5px;transform:scaleX(0.7687499999999999)">2,10 cm</span></div>
<div class="c" style="left:431.5px;top:842.25px;width:285.0px;height:16px;line-height:16px;text-align:center;"><span class="t" style="color:#f2a02a;font-weight:bold;font-size:15.5px;transform:scaleX(0.7687499999999999)">14,0 cm</span></div>
<div class="c" style="left:516.5px;top:842.25px;width:271.9px;height:16px;line-height:16px;text-align:center;"><span class="t" style="color:#f2a02a;font-weight:bold;font-size:15.5px;transform:scaleX(0.7687499999999999)">274,50 cm</span></div>
<div class="c" style="left:588.4px;top:842.25px;width:284.1px;height:16px;line-height:16px;text-align:center;"><span class="t" style="color:#f2a02a;font-weight:bold;font-size:15.5px;transform:scaleX(0.7687499999999999)">25,50 cm</span></div>
<div class="c" style="left:672.5px;top:842.25px;width:279.1px;height:16px;line-height:16px;text-align:center;"><span class="t" style="color:#f2a02a;font-weight:bold;font-size:15.5px;transform:scaleX(0.7687499999999999)">2,7 ml</span></div>
<div class="c" style="left:751.6px;top:842.25px;width:344.2px;height:16px;line-height:16px;text-align:center;"><span class="t" style="color:#e9692c;font-weight:bold;font-size:15.5px;transform:scaleX(0.7687499999999999)">1 Einheit</span></div>
<div class="c" style="left:24.5px;top:860.33px;width:517.9px;height:16px;line-height:16px;text-align:left;"><span class="t" style="color:#000;font-weight:normal;font-size:15px;transform:scaleX(0.81);transform-origin:0 50%;">Dielenbelag</span></div>
<div class="c" style="left:240.6px;top:860.33px;width:304.7px;height:16px;line-height:16px;text-align:center;"><span class="t" style="color:#000;font-weight:normal;font-size:15px;transform:scaleX(0.81)">1 Einheit</span></div>
<div class="c" style="left:345.3px;top:860.53px;width:286.2px;height:16px;line-height:16px;text-align:center;"><span class="t" style="color:#f2a02a;font-weight:bold;font-size:15.5px;transform:scaleX(0.7687499999999999)">2,10 cm</span></div>
<div class="c" style="left:431.5px;top:860.53px;width:285.0px;height:16px;line-height:16px;text-align:center;"><span class="t" style="color:#f2a02a;font-weight:bold;font-size:15.5px;transform:scaleX(0.7687499999999999)">14,0 cm</span></div>
<div class="c" style="left:516.5px;top:860.53px;width:271.9px;height:16px;line-height:16px;text-align:center;"><span class="t" style="color:#f2a02a;font-weight:bold;font-size:15.5px;transform:scaleX(0.7687499999999999)">274,20 cm</span></div>
<div class="c" style="left:588.4px;top:860.53px;width:284.1px;height:16px;line-height:16px;text-align:center;"><span class="t" style="color:#f2a02a;font-weight:bold;font-size:15.5px;transform:scaleX(0.7687499999999999)">25,80 cm</span></div>
<div class="c" style="left:672.5px;top:860.53px;width:279.1px;height:16px;line-height:16px;text-align:center;"><span class="t" style="color:#f2a02a;font-weight:bold;font-size:15.5px;transform:scaleX(0.7687499999999999)">2,7 ml</span></div>
<div class="c" style="left:751.6px;top:860.53px;width:344.2px;height:16px;line-height:16px;text-align:center;"><span class="t" style="color:#e9692c;font-weight:bold;font-size:15.5px;transform:scaleX(0.7687499999999999)">1 Einheit</span></div>
<div class="c" style="left:24.5px;top:878.61px;width:517.9px;height:16px;line-height:16px;text-align:left;"><span class="t" style="color:#000;font-weight:normal;font-size:15px;transform:scaleX(0.81);transform-origin:0 50%;">Dielenbelag</span></div>
<div class="c" style="left:240.6px;top:878.61px;width:304.7px;height:16px;line-height:16px;text-align:center;"><span class="t" style="color:#000;font-weight:normal;font-size:15px;transform:scaleX(0.81)">1 Einheit</span></div>
<div class="c" style="left:345.3px;top:878.81px;width:286.2px;height:16px;line-height:16px;text-align:center;"><span class="t" style="color:#f2a02a;font-weight:bold;font-size:15.5px;transform:scaleX(0.7687499999999999)">2,10 cm</span></div>
<div class="c" style="left:431.5px;top:878.81px;width:285.0px;height:16px;line-height:16px;text-align:center;"><span class="t" style="color:#f2a02a;font-weight:bold;font-size:15.5px;transform:scaleX(0.7687499999999999)">14,0 cm</span></div>
<div class="c" style="left:516.5px;top:878.81px;width:271.9px;height:16px;line-height:16px;text-align:center;"><span class="t" style="color:#f2a02a;font-weight:bold;font-size:15.5px;transform:scaleX(0.7687499999999999)">273,50 cm</span></div>
<div class="c" style="left:588.4px;top:878.81px;width:284.1px;height:16px;line-height:16px;text-align:center;"><span class="t" style="color:#f2a02a;font-weight:bold;font-size:15.5px;transform:scaleX(0.7687499999999999)">26,50 cm</span></div>
<div class="c" style="left:672.5px;top:878.81px;width:279.1px;height:16px;line-height:16px;text-align:center;"><span class="t" style="color:#f2a02a;font-weight:bold;font-size:15.5px;transform:scaleX(0.7687499999999999)">2,7 ml</span></div>
<div class="c" style="left:751.6px;top:878.81px;width:344.2px;height:16px;line-height:16px;text-align:center;"><span class="t" style="color:#e9692c;font-weight:bold;font-size:15.5px;transform:scaleX(0.7687499999999999)">1 Einheit</span></div>
<div class="c" style="left:24.5px;top:896.89px;width:517.9px;height:16px;line-height:16px;text-align:left;"><span class="t" style="color:#000;font-weight:normal;font-size:15px;transform:scaleX(0.81);transform-origin:0 50%;">Dielenbelag</span></div>
<div class="c" style="left:240.6px;top:896.89px;width:304.7px;height:16px;line-height:16px;text-align:center;"><span class="t" style="color:#000;font-weight:normal;font-size:15px;transform:scaleX(0.81)">1 Einheit</span></div>
<div class="c" style="left:345.3px;top:897.09px;width:286.2px;height:16px;line-height:16px;text-align:center;"><span class="t" style="color:#f2a02a;font-weight:bold;font-size:15.5px;transform:scaleX(0.7687499999999999)">2,10 cm</span></div>
<div class="c" style="left:431.5px;top:897.09px;width:285.0px;height:16px;line-height:16px;text-align:center;"><span class="t" style="color:#f2a02a;font-weight:bold;font-size:15.5px;transform:scaleX(0.7687499999999999)">14,0 cm</span></div>
<div class="c" style="left:516.5px;top:897.09px;width:271.9px;height:16px;line-height:16px;text-align:center;"><span class="t" style="color:#f2a02a;font-weight:bold;font-size:15.5px;transform:scaleX(0.7687499999999999)">272,40 cm</span></div>
<div class="c" style="left:588.4px;top:897.09px;width:284.1px;height:16px;line-height:16px;text-align:center;"><span class="t" style="color:#f2a02a;font-weight:bold;font-size:15.5px;transform:scaleX(0.7687499999999999)">27,60 cm</span></div>
<div class="c" style="left:672.5px;top:897.09px;width:279.1px;height:16px;line-height:16px;text-align:center;"><span class="t" style="color:#f2a02a;font-weight:bold;font-size:15.5px;transform:scaleX(0.7687499999999999)">2,7 ml</span></div>
<div class="c" style="left:751.6px;top:897.09px;width:344.2px;height:16px;line-height:16px;text-align:center;"><span class="t" style="color:#e9692c;font-weight:bold;font-size:15.5px;transform:scaleX(0.7687499999999999)">1 Einheit</span></div>
<div class="c" style="left:24.5px;top:915.17px;width:517.9px;height:16px;line-height:16px;text-align:left;"><span class="t" style="color:#000;font-weight:normal;font-size:15px;transform:scaleX(0.81);transform-origin:0 50%;">Dielenbelag</span></div>
<div class="c" style="left:240.6px;top:915.17px;width:304.7px;height:16px;line-height:16px;text-align:center;"><span class="t" style="color:#000;font-weight:normal;font-size:15px;transform:scaleX(0.81)">1 Einheit</span></div>
<div class="c" style="left:345.3px;top:915.37px;width:286.2px;height:16px;line-height:16px;text-align:center;"><span class="t" style="color:#f2a02a;font-weight:bold;font-size:15.5px;transform:scaleX(0.7687499999999999)">2,10 cm</span></div>
<div class="c" style="left:431.5px;top:915.37px;width:285.0px;height:16px;line-height:16px;text-align:center;"><span class="t" style="color:#f2a02a;font-weight:bold;font-size:15.5px;transform:scaleX(0.7687499999999999)">14,0 cm</span></div>
<div class="c" style="left:516.5px;top:915.37px;width:271.9px;height:16px;line-height:16px;text-align:center;"><span class="t" style="color:#f2a02a;font-weight:bold;font-size:15.5px;transform:scaleX(0.7687499999999999)">272,00 cm</span></div>
<div class="c" style="left:588.4px;top:915.37px;width:284.1px;height:16px;line-height:16px;text-align:center;"><span class="t" style="color:#f2a02a;font-weight:bold;font-size:15.5px;transform:scaleX(0.7687499999999999)">28,00 cm</span></div>
<div class="c" style="left:672.5px;top:915.37px;width:279.1px;height:16px;line-height:16px;text-align:center;"><span class="t" style="color:#f2a02a;font-weight:bold;font-size:15.5px;transform:scaleX(0.7687499999999999)">2,7 ml</span></div>
<div class="c" style="left:751.6px;top:915.37px;width:344.2px;height:16px;line-height:16px;text-align:center;"><span class="t" style="color:#e9692c;font-weight:bold;font-size:15.5px;transform:scaleX(0.7687499999999999)">1 Einheit</span></div>
<div class="c" style="left:24.5px;top:933.45px;width:517.9px;height:16px;line-height:16px;text-align:left;"><span class="t" style="color:#000;font-weight:normal;font-size:15px;transform:scaleX(0.81);transform-origin:0 50%;">Dielenbelag</span></div>
<div class="c" style="left:240.6px;top:933.45px;width:304.7px;height:16px;line-height:16px;text-align:center;"><span class="t" style="color:#000;font-weight:normal;font-size:15px;transform:scaleX(0.81)">1 Einheit</span></div>
<div class="c" style="left:345.3px;top:933.65px;width:286.2px;height:16px;line-height:16px;text-align:center;"><span class="t" style="color:#f2a02a;font-weight:bold;font-size:15.5px;transform:scaleX(0.7687499999999999)">2,10 cm</span></div>
<div class="c" style="left:431.5px;top:933.65px;width:285.0px;height:16px;line-height:16px;text-align:center;"><span class="t" style="color:#f2a02a;font-weight:bold;font-size:15.5px;transform:scaleX(0.7687499999999999)">14,0 cm</span></div>
<div class="c" style="left:516.5px;top:933.65px;width:271.9px;height:16px;line-height:16px;text-align:center;"><span class="t" style="color:#f2a02a;font-weight:bold;font-size:15.5px;transform:scaleX(0.7687499999999999)">271,40 cm</span></div>
<div class="c" style="left:588.4px;top:933.65px;width:284.1px;height:16px;line-height:16px;text-align:center;"><span class="t" style="color:#f2a02a;font-weight:bold;font-size:15.5px;transform:scaleX(0.7687499999999999)">28,60 cm</span></div>
<div class="c" style="left:672.5px;top:933.65px;width:279.1px;height:16px;line-height:16px;text-align:center;"><span class="t" style="color:#f2a02a;font-weight:bold;font-size:15.5px;transform:scaleX(0.7687499999999999)">2,7 ml</span></div>
<div class="c" style="left:751.6px;top:933.65px;width:344.2px;height:16px;line-height:16px;text-align:center;"><span class="t" style="color:#e9692c;font-weight:bold;font-size:15.5px;transform:scaleX(0.7687499999999999)">1 Einheit</span></div>
<div class="c" style="left:24.5px;top:951.73px;width:517.9px;height:16px;line-height:16px;text-align:left;"><span class="t" style="color:#000;font-weight:normal;font-size:15px;transform:scaleX(0.81);transform-origin:0 50%;">Dielenbelag</span></div>
<div class="c" style="left:240.6px;top:951.73px;width:304.7px;height:16px;line-height:16px;text-align:center;"><span class="t" style="color:#000;font-weight:normal;font-size:15px;transform:scaleX(0.81)">1 Einheit</span></div>
<div class="c" style="left:345.3px;top:951.93px;width:286.2px;height:16px;line-height:16px;text-align:center;"><span class="t" style="color:#f2a02a;font-weight:bold;font-size:15.5px;transform:scaleX(0.7687499999999999)">2,10 cm</span></div>
<div class="c" style="left:431.5px;top:951.93px;width:285.0px;height:16px;line-height:16px;text-align:center;"><span class="t" style="color:#f2a02a;font-weight:bold;font-size:15.5px;transform:scaleX(0.7687499999999999)">14,0 cm</span></div>
<div class="c" style="left:516.5px;top:951.93px;width:271.9px;height:16px;line-height:16px;text-align:center;"><span class="t" style="color:#f2a02a;font-weight:bold;font-size:15.5px;transform:scaleX(0.7687499999999999)">268,50 cm</span></div>
<div class="c" style="left:588.4px;top:951.93px;width:284.1px;height:16px;line-height:16px;text-align:center;"><span class="t" style="color:#f2a02a;font-weight:bold;font-size:15.5px;transform:scaleX(0.7687499999999999)">31,50 cm</span></div>
<div class="c" style="left:672.5px;top:951.93px;width:279.1px;height:16px;line-height:16px;text-align:center;"><span class="t" style="color:#f2a02a;font-weight:bold;font-size:15.5px;transform:scaleX(0.7687499999999999)">2,7 ml</span></div>
<div class="c" style="left:751.6px;top:951.93px;width:344.2px;height:16px;line-height:16px;text-align:center;"><span class="t" style="color:#e9692c;font-weight:bold;font-size:15.5px;transform:scaleX(0.7687499999999999)">1 Einheit</span></div>
<div class="c" style="left:24.5px;top:970.01px;width:517.9px;height:16px;line-height:16px;text-align:left;"><span class="t" style="color:#000;font-weight:normal;font-size:15px;transform:scaleX(0.81);transform-origin:0 50%;">Dielenbelag</span></div>
<div class="c" style="left:240.6px;top:970.01px;width:304.7px;height:16px;line-height:16px;text-align:center;"><span class="t" style="color:#000;font-weight:normal;font-size:15px;transform:scaleX(0.81)">1 Einheit</span></div>
<div class="c" style="left:345.3px;top:970.21px;width:286.2px;height:16px;line-height:16px;text-align:center;"><span class="t" style="color:#f2a02a;font-weight:bold;font-size:15.5px;transform:scaleX(0.7687499999999999)">2,10 cm</span></div>
<div class="c" style="left:431.5px;top:970.21px;width:285.0px;height:16px;line-height:16px;text-align:center;"><span class="t" style="color:#f2a02a;font-weight:bold;font-size:15.5px;transform:scaleX(0.7687499999999999)">14,0 cm</span></div>
<div class="c" style="left:516.5px;top:970.21px;width:271.9px;height:16px;line-height:16px;text-align:center;"><span class="t" style="color:#f2a02a;font-weight:bold;font-size:15.5px;transform:scaleX(0.7687499999999999)">266,80 cm</span></div>
<div class="c" style="left:588.4px;top:970.21px;width:284.1px;height:16px;line-height:16px;text-align:center;"><span class="t" style="color:#f2a02a;font-weight:bold;font-size:15.5px;transform:scaleX(0.7687499999999999)">33,20 cm</span></div>
<div class="c" style="left:672.5px;top:970.21px;width:279.1px;height:16px;line-height:16px;text-align:center;"><span class="t" style="color:#f2a02a;font-weight:bold;font-size:15.5px;transform:scaleX(0.7687499999999999)">2,7 ml</span></div>
<div class="c" style="left:751.6px;top:970.21px;width:344.2px;height:16px;line-height:16px;text-align:center;"><span class="t" style="color:#e9692c;font-weight:bold;font-size:15.5px;transform:scaleX(0.7687499999999999)">1 Einheit</span></div>
<div class="c" style="left:24.5px;top:988.29px;width:517.9px;height:16px;line-height:16px;text-align:left;"><span class="t" style="color:#000;font-weight:normal;font-size:15px;transform:scaleX(0.81);transform-origin:0 50%;">Dielenbelag</span></div>
<div class="c" style="left:240.6px;top:988.29px;width:304.7px;height:16px;line-height:16px;text-align:center;"><span class="t" style="color:#000;font-weight:normal;font-size:15px;transform:scaleX(0.81)">47 Einheiten</span></div>
<div class="c" style="left:345.3px;top:988.49px;width:286.2px;height:16px;line-height:16px;text-align:center;"><span class="t" style="color:#f2a02a;font-weight:bold;font-size:15.5px;transform:scaleX(0.7687499999999999)">2,10 cm</span></div>
<div class="c" style="left:431.5px;top:988.49px;width:285.0px;height:16px;line-height:16px;text-align:center;"><span class="t" style="color:#f2a02a;font-weight:bold;font-size:15.5px;transform:scaleX(0.7687499999999999)">14,0 cm</span></div>
<div class="c" style="left:516.5px;top:988.49px;width:271.9px;height:16px;line-height:16px;text-align:center;"><span class="t" style="color:#f2a02a;font-weight:bold;font-size:15.5px;transform:scaleX(0.7687499999999999)">265,00 cm</span></div>
<div class="c" style="left:588.4px;top:988.49px;width:284.1px;height:16px;line-height:16px;text-align:center;"><span class="t" style="color:#f2a02a;font-weight:bold;font-size:15.5px;transform:scaleX(0.7687499999999999)">35,00 cm</span></div>
<div class="c" style="left:672.5px;top:988.49px;width:279.1px;height:16px;line-height:16px;text-align:center;"><span class="t" style="color:#f2a02a;font-weight:bold;font-size:15.5px;transform:scaleX(0.7687499999999999)">124,6 ml</span></div>
<div class="c" style="left:751.6px;top:988.49px;width:344.2px;height:16px;line-height:16px;text-align:center;"><span class="t" style="color:#e9692c;font-weight:bold;font-size:15.5px;transform:scaleX(0.7687499999999999)">47 Einheiten</span></div>
<div class="c" style="left:24.5px;top:1006.57px;width:517.9px;height:16px;line-height:16px;text-align:left;"><span class="t" style="color:#000;font-weight:normal;font-size:15px;transform:scaleX(0.81);transform-origin:0 50%;">Dielenbelag</span></div>
<div class="c" style="left:240.6px;top:1006.57px;width:304.7px;height:16px;line-height:16px;text-align:center;"><span class="t" style="color:#000;font-weight:normal;font-size:15px;transform:scaleX(0.81)">1 Einheit</span></div>
<div class="c" style="left:345.3px;top:1006.77px;width:286.2px;height:16px;line-height:16px;text-align:center;"><span class="t" style="color:#f2a02a;font-weight:bold;font-size:15.5px;transform:scaleX(0.7687499999999999)">2,10 cm</span></div>
<div class="c" style="left:431.5px;top:1006.77px;width:285.0px;height:16px;line-height:16px;text-align:center;"><span class="t" style="color:#f2a02a;font-weight:bold;font-size:15.5px;transform:scaleX(0.7687499999999999)">14,0 cm</span></div>
<div class="c" style="left:516.5px;top:1006.77px;width:271.9px;height:16px;line-height:16px;text-align:center;"><span class="t" style="color:#f2a02a;font-weight:bold;font-size:15.5px;transform:scaleX(0.7687499999999999)">262,60 cm</span></div>
<div class="c" style="left:588.4px;top:1006.77px;width:284.1px;height:16px;line-height:16px;text-align:center;"><span class="t" style="color:#f2a02a;font-weight:bold;font-size:15.5px;transform:scaleX(0.7687499999999999)">37,40 cm</span></div>
<div class="c" style="left:672.5px;top:1006.77px;width:279.1px;height:16px;line-height:16px;text-align:center;"><span class="t" style="color:#f2a02a;font-weight:bold;font-size:15.5px;transform:scaleX(0.7687499999999999)">2,6 ml</span></div>
<div class="c" style="left:751.6px;top:1006.77px;width:344.2px;height:16px;line-height:16px;text-align:center;"><span class="t" style="color:#e9692c;font-weight:bold;font-size:15.5px;transform:scaleX(0.7687499999999999)">1 Einheit</span></div>
<div class="c" style="left:24.5px;top:1024.85px;width:517.9px;height:16px;line-height:16px;text-align:left;"><span class="t" style="color:#000;font-weight:normal;font-size:15px;transform:scaleX(0.81);transform-origin:0 50%;">Dielenbelag</span></div>
<div class="c" style="left:240.6px;top:1024.85px;width:304.7px;height:16px;line-height:16px;text-align:center;"><span class="t" style="color:#000;font-weight:normal;font-size:15px;transform:scaleX(0.81)">10 Einheiten</span></div>
<div class="c" style="left:345.3px;top:1025.05px;width:286.2px;height:16px;line-height:16px;text-align:center;"><span class="t" style="color:#f2a02a;font-weight:bold;font-size:15.5px;transform:scaleX(0.7687499999999999)">2,10 cm</span></div>
<div class="c" style="left:431.5px;top:1025.05px;width:285.0px;height:16px;line-height:16px;text-align:center;"><span class="t" style="color:#f2a02a;font-weight:bold;font-size:15.5px;transform:scaleX(0.7687499999999999)">14,0 cm</span></div>
<div class="c" style="left:516.5px;top:1025.05px;width:271.9px;height:16px;line-height:16px;text-align:center;"><span class="t" style="color:#f2a02a;font-weight:bold;font-size:15.5px;transform:scaleX(0.7687499999999999)">260,00 cm</span></div>
<div class="c" style="left:588.4px;top:1025.05px;width:284.1px;height:16px;line-height:16px;text-align:center;"><span class="t" style="color:#f2a02a;font-weight:bold;font-size:15.5px;transform:scaleX(0.7687499999999999)">40,00 cm</span></div>
<div class="c" style="left:672.5px;top:1025.05px;width:279.1px;height:16px;line-height:16px;text-align:center;"><span class="t" style="color:#f2a02a;font-weight:bold;font-size:15.5px;transform:scaleX(0.7687499999999999)">26,0 ml</span></div>
<div class="c" style="left:751.6px;top:1025.05px;width:344.2px;height:16px;line-height:16px;text-align:center;"><span class="t" style="color:#e9692c;font-weight:bold;font-size:15.5px;transform:scaleX(0.7687499999999999)">10 Einheiten</span></div>
<div class="c" style="left:24.5px;top:1043.13px;width:517.9px;height:16px;line-height:16px;text-align:left;"><span class="t" style="color:#000;font-weight:normal;font-size:15px;transform:scaleX(0.81);transform-origin:0 50%;">Dielenbelag</span></div>
<div class="c" style="left:240.6px;top:1043.13px;width:304.7px;height:16px;line-height:16px;text-align:center;"><span class="t" style="color:#000;font-weight:normal;font-size:15px;transform:scaleX(0.81)">1 Einheit</span></div>
<div class="c" style="left:345.3px;top:1043.33px;width:286.2px;height:16px;line-height:16px;text-align:center;"><span class="t" style="color:#f2a02a;font-weight:bold;font-size:15.5px;transform:scaleX(0.7687499999999999)">2,10 cm</span></div>
<div class="c" style="left:431.5px;top:1043.33px;width:285.0px;height:16px;line-height:16px;text-align:center;"><span class="t" style="color:#f2a02a;font-weight:bold;font-size:15.5px;transform:scaleX(0.7687499999999999)">14,0 cm</span></div>
<div class="c" style="left:516.5px;top:1043.33px;width:271.9px;height:16px;line-height:16px;text-align:center;"><span class="t" style="color:#f2a02a;font-weight:bold;font-size:15.5px;transform:scaleX(0.7687499999999999)">259,00 cm</span></div>
<div class="c" style="left:588.4px;top:1043.33px;width:284.1px;height:16px;line-height:16px;text-align:center;"><span class="t" style="color:#f2a02a;font-weight:bold;font-size:15.5px;transform:scaleX(0.7687499999999999)">41,00 cm</span></div>
<div class="c" style="left:672.5px;top:1043.33px;width:279.1px;height:16px;line-height:16px;text-align:center;"><span class="t" style="color:#f2a02a;font-weight:bold;font-size:15.5px;transform:scaleX(0.7687499999999999)">2,6 ml</span></div>
<div class="c" style="left:751.6px;top:1043.33px;width:344.2px;height:16px;line-height:16px;text-align:center;"><span class="t" style="color:#e9692c;font-weight:bold;font-size:15.5px;transform:scaleX(0.7687499999999999)">1 Einheit</span></div>
<div class="c" style="left:24.5px;top:1061.41px;width:517.9px;height:16px;line-height:16px;text-align:left;"><span class="t" style="color:#000;font-weight:normal;font-size:15px;transform:scaleX(0.81);transform-origin:0 50%;">Dielenbelag</span></div>
<div class="c" style="left:240.6px;top:1061.41px;width:304.7px;height:16px;line-height:16px;text-align:center;"><span class="t" style="color:#000;font-weight:normal;font-size:15px;transform:scaleX(0.81)">1 Einheit</span></div>
<div class="c" style="left:345.3px;top:1061.61px;width:286.2px;height:16px;line-height:16px;text-align:center;"><span class="t" style="color:#f2a02a;font-weight:bold;font-size:15.5px;transform:scaleX(0.7687499999999999)">2,10 cm</span></div>
<div class="c" style="left:431.5px;top:1061.61px;width:285.0px;height:16px;line-height:16px;text-align:center;"><span class="t" style="color:#f2a02a;font-weight:bold;font-size:15.5px;transform:scaleX(0.7687499999999999)">14,0 cm</span></div>
<div class="c" style="left:516.5px;top:1061.61px;width:271.9px;height:16px;line-height:16px;text-align:center;"><span class="t" style="color:#f2a02a;font-weight:bold;font-size:15.5px;transform:scaleX(0.7687499999999999)">257,10 cm</span></div>
<div class="c" style="left:588.4px;top:1061.61px;width:284.1px;height:16px;line-height:16px;text-align:center;"><span class="t" style="color:#fff;font-weight:bold;font-size:15.5px;transform:scaleX(0.7687499999999999)">42,90 cm</span></div>
<div class="c" style="left:672.5px;top:1061.61px;width:279.1px;height:16px;line-height:16px;text-align:center;"><span class="t" style="color:#f2a02a;font-weight:bold;font-size:15.5px;transform:scaleX(0.7687499999999999)">2,6 ml</span></div>
<div class="c" style="left:751.6px;top:1061.61px;width:344.2px;height:16px;line-height:16px;text-align:center;"><span class="t" style="color:#e9692c;font-weight:bold;font-size:15.5px;transform:scaleX(0.7687499999999999)">1 Einheit</span></div>
<div class="c" style="left:24.5px;top:1079.69px;width:517.9px;height:16px;line-height:16px;text-align:left;"><span class="t" style="color:#000;font-weight:normal;font-size:15px;transform:scaleX(0.81);transform-origin:0 50%;">Dielenbelag</span></div>
<div class="c" style="left:240.6px;top:1079.69px;width:304.7px;height:16px;line-height:16px;text-align:center;"><span class="t" style="color:#000;font-weight:normal;font-size:15px;transform:scaleX(0.81)">1 Einheit</span></div>
<div class="c" style="left:345.3px;top:1079.89px;width:286.2px;height:16px;line-height:16px;text-align:center;"><span class="t" style="color:#f2a02a;font-weight:bold;font-size:15.5px;transform:scaleX(0.7687499999999999)">2,10 cm</span></div>
<div class="c" style="left:431.5px;top:1079.89px;width:285.0px;height:16px;line-height:16px;text-align:center;"><span class="t" style="color:#f2a02a;font-weight:bold;font-size:15.5px;transform:scaleX(0.7687499999999999)">14,0 cm</span></div>
<div class="c" style="left:516.5px;top:1079.89px;width:271.9px;height:16px;line-height:16px;text-align:center;"><span class="t" style="color:#f2a02a;font-weight:bold;font-size:15.5px;transform:scaleX(0.7687499999999999)">254,60 cm</span></div>
<div class="c" style="left:588.4px;top:1079.89px;width:284.1px;height:16px;line-height:16px;text-align:center;"><span class="t" style="color:#f2a02a;font-weight:bold;font-size:15.5px;transform:scaleX(0.7687499999999999)">45,40 cm</span></div>
<div class="c" style="left:672.5px;top:1079.89px;width:279.1px;height:16px;line-height:16px;text-align:center;"><span class="t" style="color:#f2a02a;font-weight:bold;font-size:15.5px;transform:scaleX(0.7687499999999999)">2,5 ml</span></div>
<div class="c" style="left:751.6px;top:1079.89px;width:344.2px;height:16px;line-height:16px;text-align:center;"><span class="t" style="color:#e9692c;font-weight:bold;font-size:15.5px;transform:scaleX(0.7687499999999999)">1 Einheit</span></div>
<div class="c" style="left:24.5px;top:1097.97px;width:517.9px;height:16px;line-height:16px;text-align:left;"><span class="t" style="color:#000;font-weight:normal;font-size:15px;transform:scaleX(0.81);transform-origin:0 50%;">Dielenbelag</span></div>
<div class="c" style="left:240.6px;top:1097.97px;width:304.7px;height:16px;line-height:16px;text-align:center;"><span class="t" style="color:#000;font-weight:normal;font-size:15px;transform:scaleX(0.81)">1 Einheit</span></div>
<div class="c" style="left:345.3px;top:1098.17px;width:286.2px;height:16px;line-height:16px;text-align:center;"><span class="t" style="color:#f2a02a;font-weight:bold;font-size:15.5px;transform:scaleX(0.7687499999999999)">2,10 cm</span></div>
<div class="c" style="left:431.5px;top:1098.17px;width:285.0px;height:16px;line-height:16px;text-align:center;"><span class="t" style="color:#f2a02a;font-weight:bold;font-size:15.5px;transform:scaleX(0.7687499999999999)">14,0 cm</span></div>
<div class="c" style="left:516.5px;top:1098.17px;width:271.9px;height:16px;line-height:16px;text-align:center;"><span class="t" style="color:#f2a02a;font-weight:bold;font-size:15.5px;transform:scaleX(0.7687499999999999)">248,00 cm</span></div>
<div class="c" style="left:588.4px;top:1098.17px;width:284.1px;height:16px;line-height:16px;text-align:center;"><span class="t" style="color:#fff;font-weight:bold;font-size:15.5px;transform:scaleX(0.7687499999999999)">52,00 cm</span></div>
<div class="c" style="left:672.5px;top:1098.17px;width:279.1px;height:16px;line-height:16px;text-align:center;"><span class="t" style="color:#f2a02a;font-weight:bold;font-size:15.5px;transform:scaleX(0.7687499999999999)">2,5 ml</span></div>
<div class="c" style="left:751.6px;top:1098.17px;width:344.2px;height:16px;line-height:16px;text-align:center;"><span class="t" style="color:#e9692c;font-weight:bold;font-size:15.5px;transform:scaleX(0.7687499999999999)">1 Einheit</span></div>
<div class="c" style="left:24.5px;top:1116.25px;width:517.9px;height:16px;line-height:16px;text-align:left;"><span class="t" style="color:#000;font-weight:normal;font-size:15px;transform:scaleX(0.81);transform-origin:0 50%;">Dielenbelag</span></div>
<div class="c" style="left:240.6px;top:1116.25px;width:304.7px;height:16px;line-height:16px;text-align:center;"><span class="t" style="color:#000;font-weight:normal;font-size:15px;transform:scaleX(0.81)">1 Einheit</span></div>
<div class="c" style="left:345.3px;top:1116.45px;width:286.2px;height:16px;line-height:16px;text-align:center;"><span class="t" style="color:#f2a02a;font-weight:bold;font-size:15.5px;transform:scaleX(0.7687499999999999)">2,10 cm</span></div>
<div class="c" style="left:431.5px;top:1116.45px;width:285.0px;height:16px;line-height:16px;text-align:center;"><span class="t" style="color:#f2a02a;font-weight:bold;font-size:15.5px;transform:scaleX(0.7687499999999999)">14,0 cm</span></div>
<div class="c" style="left:516.5px;top:1116.45px;width:271.9px;height:16px;line-height:16px;text-align:center;"><span class="t" style="color:#f2a02a;font-weight:bold;font-size:15.5px;transform:scaleX(0.7687499999999999)">245,60 cm</span></div>
<div class="c" style="left:588.4px;top:1116.45px;width:284.1px;height:16px;line-height:16px;text-align:center;"><span class="t" style="color:#e0306a;font-weight:bold;font-size:15.5px;transform:scaleX(0.7687499999999999)">54,40 cm</span></div>
<div class="c" style="left:672.5px;top:1116.45px;width:279.1px;height:16px;line-height:16px;text-align:center;"><span class="t" style="color:#f2a02a;font-weight:bold;font-size:15.5px;transform:scaleX(0.7687499999999999)">2,5 ml</span></div>
<div class="c" style="left:751.6px;top:1116.45px;width:344.2px;height:16px;line-height:16px;text-align:center;"><span class="t" style="color:#e9692c;font-weight:bold;font-size:15.5px;transform:scaleX(0.7687499999999999)">1 Einheit</span></div>
<div class="c" style="left:24.5px;top:1134.53px;width:517.9px;height:16px;line-height:16px;text-align:left;"><span class="t" style="color:#000;font-weight:normal;font-size:15px;transform:scaleX(0.81);transform-origin:0 50%;">Dielenbelag</span></div>
<div class="c" style="left:240.6px;top:1134.53px;width:304.7px;height:16px;line-height:16px;text-align:center;"><span class="t" style="color:#000;font-weight:normal;font-size:15px;transform:scaleX(0.81)">1 Einheit</span></div>
<div class="c" style="left:345.3px;top:1134.73px;width:286.2px;height:16px;line-height:16px;text-align:center;"><span class="t" style="color:#f2a02a;font-weight:bold;font-size:15.5px;transform:scaleX(0.7687499999999999)">2,10 cm</span></div>
<div class="c" style="left:431.5px;top:1134.73px;width:285.0px;height:16px;line-height:16px;text-align:center;"><span class="t" style="color:#f2a02a;font-weight:bold;font-size:15.5px;transform:scaleX(0.7687499999999999)">14,0 cm</span></div>
<div class="c" style="left:516.5px;top:1134.73px;width:271.9px;height:16px;line-height:16px;text-align:center;"><span class="t" style="color:#f2a02a;font-weight:bold;font-size:15.5px;transform:scaleX(0.7687499999999999)">240,30 cm</span></div>
<div class="c" style="left:588.4px;top:1134.73px;width:284.1px;height:16px;line-height:16px;text-align:center;"><span class="t" style="color:#fff;font-weight:bold;font-size:15.5px;transform:scaleX(0.7687499999999999)">59,70 cm</span></div>
<div class="c" style="left:672.5px;top:1134.73px;width:279.1px;height:16px;line-height:16px;text-align:center;"><span class="t" style="color:#f2a02a;font-weight:bold;font-size:15.5px;transform:scaleX(0.7687499999999999)">2,4 ml</span></div>
<div class="c" style="left:751.6px;top:1134.73px;width:344.2px;height:16px;line-height:16px;text-align:center;"><span class="t" style="color:#e9692c;font-weight:bold;font-size:15.5px;transform:scaleX(0.7687499999999999)">1 Einheit</span></div>
<div class="c" style="left:24.5px;top:1152.81px;width:517.9px;height:16px;line-height:16px;text-align:left;"><span class="t" style="color:#000;font-weight:normal;font-size:15px;transform:scaleX(0.81);transform-origin:0 50%;">Dielenbelag</span></div>
<div class="c" style="left:240.6px;top:1152.81px;width:304.7px;height:16px;line-height:16px;text-align:center;"><span class="t" style="color:#000;font-weight:normal;font-size:15px;transform:scaleX(0.81)">1 Einheit</span></div>
<div class="c" style="left:345.3px;top:1153.01px;width:286.2px;height:16px;line-height:16px;text-align:center;"><span class="t" style="color:#f2a02a;font-weight:bold;font-size:15.5px;transform:scaleX(0.7687499999999999)">2,10 cm</span></div>
<div class="c" style="left:431.5px;top:1153.01px;width:285.0px;height:16px;line-height:16px;text-align:center;"><span class="t" style="color:#f2a02a;font-weight:bold;font-size:15.5px;transform:scaleX(0.7687499999999999)">14,0 cm</span></div>
<div class="c" style="left:516.5px;top:1153.01px;width:271.9px;height:16px;line-height:16px;text-align:center;"><span class="t" style="color:#f2a02a;font-weight:bold;font-size:15.5px;transform:scaleX(0.7687499999999999)">239,20 cm</span></div>
<div class="c" style="left:588.4px;top:1153.01px;width:284.1px;height:16px;line-height:16px;text-align:center;"><span class="t" style="color:#b5b84a;font-weight:bold;font-size:15.5px;transform:scaleX(0.7687499999999999)">60,80 cm</span></div>
<div class="c" style="left:672.5px;top:1153.01px;width:279.1px;height:16px;line-height:16px;text-align:center;"><span class="t" style="color:#f2a02a;font-weight:bold;font-size:15.5px;transform:scaleX(0.7687499999999999)">2,4 ml</span></div>
<div class="c" style="left:751.6px;top:1153.01px;width:344.2px;height:16px;line-height:16px;text-align:center;"><span class="t" style="color:#e9692c;font-weight:bold;font-size:15.5px;transform:scaleX(0.7687499999999999)">1 Einheit</span></div>
<div class="c" style="left:24.5px;top:1171.09px;width:517.9px;height:16px;line-height:16px;text-align:left;"><span class="t" style="color:#000;font-weight:normal;font-size:15px;transform:scaleX(0.81);transform-origin:0 50%;">Dielenbelag</span></div>
<div class="c" style="left:240.6px;top:1171.09px;width:304.7px;height:16px;line-height:16px;text-align:center;"><span class="t" style="color:#000;font-weight:normal;font-size:15px;transform:scaleX(0.81)">1 Einheit</span></div>
<div class="c" style="left:345.3px;top:1171.29px;width:286.2px;height:16px;line-height:16px;text-align:center;"><span class="t" style="color:#f2a02a;font-weight:bold;font-size:15.5px;transform:scaleX(0.7687499999999999)">2,10 cm</span></div>
<div class="c" style="left:431.5px;top:1171.29px;width:285.0px;height:16px;line-height:16px;text-align:center;"><span class="t" style="color:#f2a02a;font-weight:bold;font-size:15.5px;transform:scaleX(0.7687499999999999)">14,0 cm</span></div>
<div class="c" style="left:516.5px;top:1171.29px;width:271.9px;height:16px;line-height:16px;text-align:center;"><span class="t" style="color:#f2a02a;font-weight:bold;font-size:15.5px;transform:scaleX(0.7687499999999999)">237,10 cm</span></div>
<div class="c" style="left:588.4px;top:1171.29px;width:284.1px;height:16px;line-height:16px;text-align:center;"><span class="t" style="color:#000;font-weight:bold;font-size:15.5px;transform:scaleX(0.7687499999999999)">62,90 cm</span></div>
<div class="c" style="left:672.5px;top:1171.29px;width:279.1px;height:16px;line-height:16px;text-align:center;"><span class="t" style="color:#f2a02a;font-weight:bold;font-size:15.5px;transform:scaleX(0.7687499999999999)">2,4 ml</span></div>
<div class="c" style="left:751.6px;top:1171.29px;width:344.2px;height:16px;line-height:16px;text-align:center;"><span class="t" style="color:#e9692c;font-weight:bold;font-size:15.5px;transform:scaleX(0.7687499999999999)">1 Einheit</span></div>
<div class="c" style="left:24.5px;top:1189.37px;width:517.9px;height:16px;line-height:16px;text-align:left;"><span class="t" style="color:#000;font-weight:normal;font-size:15px;transform:scaleX(0.81);transform-origin:0 50%;">Dielenbelag</span></div>
<div class="c" style="left:240.6px;top:1189.37px;width:304.7px;height:16px;line-height:16px;text-align:center;"><span class="t" style="color:#000;font-weight:normal;font-size:15px;transform:scaleX(0.81)">1 Einheit</span></div>
<div class="c" style="left:345.3px;top:1189.57px;width:286.2px;height:16px;line-height:16px;text-align:center;"><span class="t" style="color:#f2a02a;font-weight:bold;font-size:15.5px;transform:scaleX(0.7687499999999999)">2,10 cm</span></div>
<div class="c" style="left:431.5px;top:1189.57px;width:285.0px;height:16px;line-height:16px;text-align:center;"><span class="t" style="color:#f2a02a;font-weight:bold;font-size:15.5px;transform:scaleX(0.7687499999999999)">14,0 cm</span></div>
<div class="c" style="left:516.5px;top:1189.57px;width:271.9px;height:16px;line-height:16px;text-align:center;"><span class="t" style="color:#f2a02a;font-weight:bold;font-size:15.5px;transform:scaleX(0.7687499999999999)">229,50 cm</span></div>
<div class="c" style="left:588.4px;top:1189.57px;width:284.1px;height:16px;line-height:16px;text-align:center;"><span class="t" style="color:#fff;font-weight:bold;font-size:15.5px;transform:scaleX(0.7687499999999999)">70,50 cm</span></div>
<div class="c" style="left:672.5px;top:1189.57px;width:279.1px;height:16px;line-height:16px;text-align:center;"><span class="t" style="color:#f2a02a;font-weight:bold;font-size:15.5px;transform:scaleX(0.7687499999999999)">2,3 ml</span></div>
<div class="c" style="left:751.6px;top:1189.57px;width:344.2px;height:16px;line-height:16px;text-align:center;"><span class="t" style="color:#e9692c;font-weight:bold;font-size:15.5px;transform:scaleX(0.7687499999999999)">1 Einheit</span></div>
<div class="c" style="left:24.5px;top:1207.65px;width:517.9px;height:16px;line-height:16px;text-align:left;"><span class="t" style="color:#000;font-weight:normal;font-size:15px;transform:scaleX(0.81);transform-origin:0 50%;">Dielenbelag</span></div>
<div class="c" style="left:240.6px;top:1207.65px;width:304.7px;height:16px;line-height:16px;text-align:center;"><span class="t" style="color:#000;font-weight:normal;font-size:15px;transform:scaleX(0.81)">1 Einheit</span></div>
<div class="c" style="left:345.3px;top:1207.85px;width:286.2px;height:16px;line-height:16px;text-align:center;"><span class="t" style="color:#f2a02a;font-weight:bold;font-size:15.5px;transform:scaleX(0.7687499999999999)">2,10 cm</span></div>
<div class="c" style="left:431.5px;top:1207.85px;width:285.0px;height:16px;line-height:16px;text-align:center;"><span class="t" style="color:#f2a02a;font-weight:bold;font-size:15.5px;transform:scaleX(0.7687499999999999)">14,0 cm</span></div>
<div class="c" style="left:516.5px;top:1207.85px;width:271.9px;height:16px;line-height:16px;text-align:center;"><span class="t" style="color:#f2a02a;font-weight:bold;font-size:15.5px;transform:scaleX(0.7687499999999999)">226,00 cm</span></div>
<div class="c" style="left:588.4px;top:1207.85px;width:284.1px;height:16px;line-height:16px;text-align:center;"><span class="t" style="color:#f2a02a;font-weight:bold;font-size:15.5px;transform:scaleX(0.7687499999999999)">74,00 cm</span></div>
<div class="c" style="left:672.5px;top:1207.85px;width:279.1px;height:16px;line-height:16px;text-align:center;"><span class="t" style="color:#f2a02a;font-weight:bold;font-size:15.5px;transform:scaleX(0.7687499999999999)">2,3 ml</span></div>
<div class="c" style="left:751.6px;top:1207.85px;width:344.2px;height:16px;line-height:16px;text-align:center;"><span class="t" style="color:#e9692c;font-weight:bold;font-size:15.5px;transform:scaleX(0.7687499999999999)">1 Einheit</span></div>
<div class="c" style="left:24.5px;top:1225.93px;width:517.9px;height:16px;line-height:16px;text-align:left;"><span class="t" style="color:#000;font-weight:normal;font-size:15px;transform:scaleX(0.81);transform-origin:0 50%;">Dielenbelag</span></div>
<div class="c" style="left:240.6px;top:1225.93px;width:304.7px;height:16px;line-height:16px;text-align:center;"><span class="t" style="color:#000;font-weight:normal;font-size:15px;transform:scaleX(0.81)">10 Einheiten</span></div>
<div class="c" style="left:345.3px;top:1226.13px;width:286.2px;height:16px;line-height:16px;text-align:center;"><span class="t" style="color:#f2a02a;font-weight:bold;font-size:15.5px;transform:scaleX(0.7687499999999999)">2,10 cm</span></div>
<div class="c" style="left:431.5px;top:1226.13px;width:285.0px;height:16px;line-height:16px;text-align:center;"><span class="t" style="color:#f2a02a;font-weight:bold;font-size:15.5px;transform:scaleX(0.7687499999999999)">14,0 cm</span></div>
<div class="c" style="left:516.5px;top:1226.13px;width:271.9px;height:16px;line-height:16px;text-align:center;"><span class="t" style="color:#f2a02a;font-weight:bold;font-size:15.5px;transform:scaleX(0.7687499999999999)">224,00 cm</span></div>
<div class="c" style="left:588.4px;top:1226.13px;width:284.1px;height:16px;line-height:16px;text-align:center;"><span class="t" style="color:#fff;font-weight:bold;font-size:15.5px;transform:scaleX(0.7687499999999999)">76,00 cm</span></div>
<div class="c" style="left:672.5px;top:1226.13px;width:279.1px;height:16px;line-height:16px;text-align:center;"><span class="t" style="color:#f2a02a;font-weight:bold;font-size:15.5px;transform:scaleX(0.7687499999999999)">22,4 ml</span></div>
<div class="c" style="left:751.6px;top:1226.13px;width:344.2px;height:16px;line-height:16px;text-align:center;"><span class="t" style="color:#e9692c;font-weight:bold;font-size:15.5px;transform:scaleX(0.7687499999999999)">10 Einheiten</span></div>
<div class="c" style="left:22.7px;top:272.0px;width:317.9px;height:16px;line-height:16px;text-align:center;"><span class="t" style="color:#000;font-size:14px;transform:scaleX(0.95)">A</span></div>
<div class="c" style="left:340.6px;top:272.0px;width:104.7px;height:16px;line-height:16px;text-align:center;"><span class="t" style="color:#000;font-size:14px;transform:scaleX(0.95)">B</span></div>
<div class="c" style="left:445.3px;top:272.0px;width:86.2px;height:16px;line-height:16px;text-align:center;"><span class="t" style="color:#000;font-size:14px;transform:scaleX(0.95)">D</span></div>
<div class="c" style="left:531.5px;top:272.0px;width:85.0px;height:16px;line-height:16px;text-align:center;"><span class="t" style="color:#000;font-size:14px;transform:scaleX(0.95)">E</span></div>
<div class="c" style="left:616.5px;top:272.0px;width:71.9px;height:16px;line-height:16px;text-align:center;"><span class="t" style="color:#000;font-size:14px;transform:scaleX(0.95)">F</span></div>
<div class="c" style="left:688.4px;top:272.0px;width:84.1px;height:16px;line-height:16px;text-align:center;"><span class="t" style="color:#000;font-size:14px;transform:scaleX(0.95)">G</span></div>
<div class="c" style="left:772.5px;top:272.0px;width:79.1px;height:16px;line-height:16px;text-align:center;"><span class="t" style="color:#000;font-size:14px;transform:scaleX(0.95)">H</span></div>
<div class="c" style="left:851.6px;top:272.0px;width:144.2px;height:16px;line-height:16px;text-align:center;"><span class="t" style="color:#000;font-size:14px;transform:scaleX(0.95)">I</span></div>
<div class="c" style="left:0px;top:299.9px;width:22.7px;height:16px;line-height:16px;text-align:center;"><span class="t" style="color:#000;font-size:14.5px;transform:scaleX(0.84)">1</span></div>
<div class="c" style="left:0px;top:339.5px;width:22.7px;height:16px;line-height:16px;text-align:center;"><span class="t" style="color:#000;font-size:14.5px;transform:scaleX(0.84)">2</span></div>
<div class="c" style="left:0px;top:358.7px;width:22.7px;height:16px;line-height:16px;text-align:center;"><span class="t" style="color:#000;font-size:14.5px;transform:scaleX(0.84)">27</span></div>
<div class="c" style="left:0px;top:377.3px;width:22.7px;height:16px;line-height:16px;text-align:center;"><span class="t" style="color:#000;font-size:14.5px;transform:scaleX(0.84)">28</span></div>
<div class="c" style="left:0px;top:395.1px;width:22.7px;height:16px;line-height:16px;text-align:center;"><span class="t" style="color:#000;font-size:14.5px;transform:scaleX(0.84)">29</span></div>
<div class="c" style="left:0px;top:413.7px;width:22.7px;height:16px;line-height:16px;text-align:center;"><span class="t" style="color:#000;font-size:14.5px;transform:scaleX(0.84)">30</span></div>
<div class="c" style="left:0px;top:432.3px;width:22.7px;height:16px;line-height:16px;text-align:center;"><span class="t" style="color:#000;font-size:14.5px;transform:scaleX(0.84)">31</span></div>
<div class="c" style="left:0px;top:450.3px;width:22.7px;height:16px;line-height:16px;text-align:center;"><span class="t" style="color:#000;font-size:14.5px;transform:scaleX(0.84)">32</span></div>
<div class="c" style="left:0px;top:468.4px;width:22.7px;height:16px;line-height:16px;text-align:center;"><span class="t" style="color:#000;font-size:14.5px;transform:scaleX(0.84)">33</span></div>
<div class="c" style="left:0px;top:486.8px;width:22.7px;height:16px;line-height:16px;text-align:center;"><span class="t" style="color:#000;font-size:14.5px;transform:scaleX(0.84)">34</span></div>
<div class="c" style="left:0px;top:505.2px;width:22.7px;height:16px;line-height:16px;text-align:center;"><span class="t" style="color:#000;font-size:14.5px;transform:scaleX(0.84)">35</span></div>
<div class="c" style="left:0px;top:523.7px;width:22.7px;height:16px;line-height:16px;text-align:center;"><span class="t" style="color:#000;font-size:14.5px;transform:scaleX(0.84)">36</span></div>
<div class="c" style="left:0px;top:541.9px;width:22.7px;height:16px;line-height:16px;text-align:center;"><span class="t" style="color:#000;font-size:14.5px;transform:scaleX(0.84)">37</span></div>
<div class="c" style="left:0px;top:579.1px;width:22.7px;height:16px;line-height:16px;text-align:center;"><span class="t" style="color:#000;font-size:14.5px;transform:scaleX(0.84)">38</span></div>
<div class="c" style="left:0px;top:598.1px;width:22.7px;height:16px;line-height:16px;text-align:center;"><span class="t" style="color:#000;font-size:14.5px;transform:scaleX(0.84)">39</span></div>
<div class="c" style="left:0px;top:617.1px;width:22.7px;height:16px;line-height:16px;text-align:center;"><span class="t" style="color:#000;font-size:14.5px;transform:scaleX(0.84)">40</span></div>
<div class="c" style="left:0px;top:636.3px;width:22.7px;height:16px;line-height:16px;text-align:center;"><span class="t" style="color:#000;font-size:14.5px;transform:scaleX(0.84)">41</span></div>
<div class="c" style="left:0px;top:655.8px;width:22.7px;height:16px;line-height:16px;text-align:center;"><span class="t" style="color:#000;font-size:14.5px;transform:scaleX(0.84)">42</span></div>
<div class="c" style="left:0px;top:675.0px;width:22.7px;height:16px;line-height:16px;text-align:center;"><span class="t" style="color:#000;font-size:14.5px;transform:scaleX(0.84)">43</span></div>
<div class="c" style="left:0px;top:712.7px;width:22.7px;height:16px;line-height:16px;text-align:center;"><span class="t" style="color:#000;font-size:14.5px;transform:scaleX(0.84)">44</span></div>
<div class="c" style="left:0px;top:731.3px;width:22.7px;height:16px;line-height:16px;text-align:center;"><span class="t" style="color:#000;font-size:14.5px;transform:scaleX(0.84)">45</span></div>
<div class="c" style="left:0px;top:750.3px;width:22.7px;height:16px;line-height:16px;text-align:center;"><span class="t" style="color:#000;font-size:14.5px;transform:scaleX(0.84)">46</span></div>
<div class="c" style="left:0px;top:768.58px;width:22.7px;height:16px;line-height:16px;text-align:center;"><span class="t" style="color:#000;font-size:14.5px;transform:scaleX(0.84)">47</span></div>
<div class="c" style="left:0px;top:786.86px;width:22.7px;height:16px;line-height:16px;text-align:center;"><span class="t" style="color:#000;font-size:14.5px;transform:scaleX(0.84)">48</span></div>
<div class="c" style="left:0px;top:805.14px;width:22.7px;height:16px;line-height:16px;text-align:center;"><span class="t" style="color:#000;font-size:14.5px;transform:scaleX(0.84)">49</span></div>
<div class="c" style="left:0px;top:823.42px;width:22.7px;height:16px;line-height:16px;text-align:center;"><span class="t" style="color:#000;font-size:14.5px;transform:scaleX(0.84)">50</span></div>
<div class="c" style="left:0px;top:841.7px;width:22.7px;height:16px;line-height:16px;text-align:center;"><span class="t" style="color:#000;font-size:14.5px;transform:scaleX(0.84)">51</span></div>
<div class="c" style="left:0px;top:859.98px;width:22.7px;height:16px;line-height:16px;text-align:center;"><span class="t" style="color:#000;font-size:14.5px;transform:scaleX(0.84)">52</span></div>
<div class="c" style="left:0px;top:878.26px;width:22.7px;height:16px;line-height:16px;text-align:center;"><span class="t" style="color:#000;font-size:14.5px;transform:scaleX(0.84)">53</span></div>
<div class="c" style="left:0px;top:896.54px;width:22.7px;height:16px;line-height:16px;text-align:center;"><span class="t" style="color:#000;font-size:14.5px;transform:scaleX(0.84)">54</span></div>
<div class="c" style="left:0px;top:914.82px;width:22.7px;height:16px;line-height:16px;text-align:center;"><span class="t" style="color:#000;font-size:14.5px;transform:scaleX(0.84)">55</span></div>
<div class="c" style="left:0px;top:933.1px;width:22.7px;height:16px;line-height:16px;text-align:center;"><span class="t" style="color:#000;font-size:14.5px;transform:scaleX(0.84)">56</span></div>
<div class="c" style="left:0px;top:951.38px;width:22.7px;height:16px;line-height:16px;text-align:center;"><span class="t" style="color:#000;font-size:14.5px;transform:scaleX(0.84)">57</span></div>
<div class="c" style="left:0px;top:969.66px;width:22.7px;height:16px;line-height:16px;text-align:center;"><span class="t" style="color:#000;font-size:14.5px;transform:scaleX(0.84)">58</span></div>
<div class="c" style="left:0px;top:987.94px;width:22.7px;height:16px;line-height:16px;text-align:center;"><span class="t" style="color:#000;font-size:14.5px;transform:scaleX(0.84)">59</span></div>
<div class="c" style="left:0px;top:1006.22px;width:22.7px;height:16px;line-height:16px;text-align:center;"><span class="t" style="color:#000;font-size:14.5px;transform:scaleX(0.84)">60</span></div>
<div class="c" style="left:0px;top:1024.5px;width:22.7px;height:16px;line-height:16px;text-align:center;"><span class="t" style="color:#000;font-size:14.5px;transform:scaleX(0.84)">61</span></div>
<div class="c" style="left:0px;top:1042.78px;width:22.7px;height:16px;line-height:16px;text-align:center;"><span class="t" style="color:#000;font-size:14.5px;transform:scaleX(0.84)">62</span></div>
<div class="c" style="left:0px;top:1061.06px;width:22.7px;height:16px;line-height:16px;text-align:center;"><span class="t" style="color:#000;font-size:14.5px;transform:scaleX(0.84)">63</span></div>
<div class="c" style="left:0px;top:1079.34px;width:22.7px;height:16px;line-height:16px;text-align:center;"><span class="t" style="color:#000;font-size:14.5px;transform:scaleX(0.84)">64</span></div>
<div class="c" style="left:0px;top:1097.62px;width:22.7px;height:16px;line-height:16px;text-align:center;"><span class="t" style="color:#000;font-size:14.5px;transform:scaleX(0.84)">65</span></div>
<div class="c" style="left:0px;top:1115.9px;width:22.7px;height:16px;line-height:16px;text-align:center;"><span class="t" style="color:#000;font-size:14.5px;transform:scaleX(0.84)">66</span></div>
<div class="c" style="left:0px;top:1134.18px;width:22.7px;height:16px;line-height:16px;text-align:center;"><span class="t" style="color:#000;font-size:14.5px;transform:scaleX(0.84)">67</span></div>
<div class="c" style="left:0px;top:1152.46px;width:22.7px;height:16px;line-height:16px;text-align:center;"><span class="t" style="color:#000;font-size:14.5px;transform:scaleX(0.84)">68</span></div>
<div class="c" style="left:0px;top:1170.74px;width:22.7px;height:16px;line-height:16px;text-align:center;"><span class="t" style="color:#000;font-size:14.5px;transform:scaleX(0.84)">69</span></div>
<div class="c" style="left:0px;top:1189.02px;width:22.7px;height:16px;line-height:16px;text-align:center;"><span class="t" style="color:#000;font-size:14.5px;transform:scaleX(0.84)">70</span></div>
<div class="c" style="left:0px;top:1207.3px;width:22.7px;height:16px;line-height:16px;text-align:center;"><span class="t" style="color:#000;font-size:14.5px;transform:scaleX(0.84)">71</span></div>
<div class="c" style="left:0px;top:1225.58px;width:22.7px;height:16px;line-height:16px;text-align:center;"><span class="t" style="color:#000;font-size:14.5px;transform:scaleX(0.84)">72</span></div>
<div style="left:0;top:1238.4px;width:1000px;height:172px;background:#fff"></div>
<svg style="position:absolute;left:0;top:0;mix-blend-mode:multiply" width="1000" height="1410">
 <g fill="#e3e3e3" fill-rule="evenodd">
  <circle cx="306" cy="694.7" r="44.3" fill="none" stroke="#e3e3e3" stroke-width="9.6"/>
  <path d="M326.2 675.3 A27.9 27.9 0 1 0 326.2 714.1 Z M326.2 680.2 H308 A13.5 13.5 0 0 0 308 707.2 H326.2 Z"/>
  <path d="M433.5 644.4 H483 C500 644.4 508 654 508 667 C508 679 501 687 494 692 C507 696 514.5 705 514.5 718 C514.5 734 503 743.4 484 743.4 H433.5 Z M458.5 662.4 H479 C486 662.4 489 667 489 673.5 C489 680 486 684.9 479 684.9 H458.5 Z M458.5 702.5 H482 C490 702.5 494 708 494 714.5 C494 721 490 726.2 482 726.2 H458.5 Z"/>
  <rect x="537.1" y="645" width="26" height="98.4"/>
  <path d="M587.5 645 H612.7 V724.5 H657.7 V743.4 H587.5 Z"/>
  <path d="M674.4 645 H725 C745 645 756 658 756 677.5 C756 697 745 709.8 725 709.8 H700.2 V743.4 H674.4 Z M700.2 663 H720 C728 663 730 670 730 677.4 C730 685 727 691.8 720 691.8 H700.2 Z"/>
 </g>
</svg>

</body></html>
